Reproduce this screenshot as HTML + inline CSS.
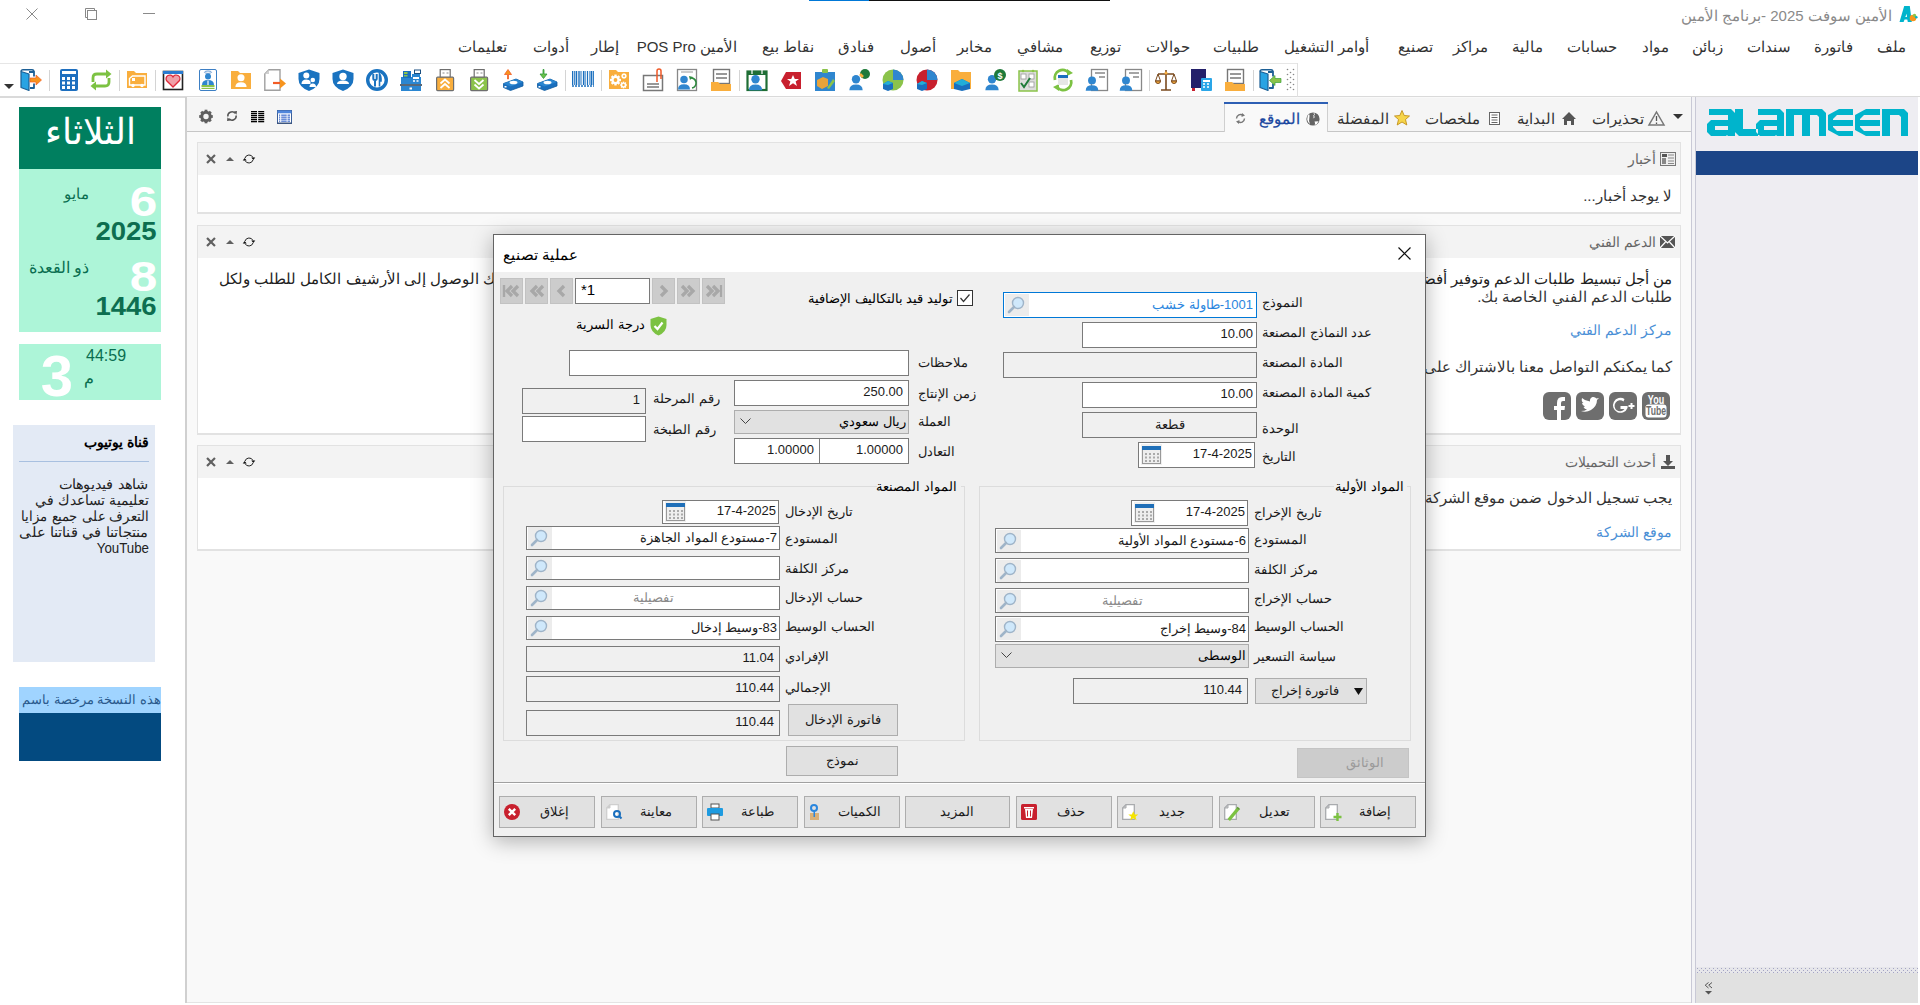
<!DOCTYPE html>
<html><head><meta charset="utf-8"><style>
html,body{margin:0;padding:0;width:1920px;height:1005px;overflow:hidden;background:#fff;font-family:"Liberation Sans",sans-serif}
div{position:absolute;box-sizing:border-box}
.t{white-space:nowrap}
svg{overflow:visible}
</style></head><body>
<div style="left:809px;top:0px;width:60px;height:1px;background:#0078d7"></div>
<div style="left:869px;top:0px;width:241px;height:1px;background:#111"></div>
<svg style="position:absolute;left:26px;top:8px" width="12" height="12" viewBox="0 0 12 12"><path d="M0.5 0.5L11.5 11.5M11.5 0.5L0.5 11.5" stroke="#8a8a8a" stroke-width="1"/></svg>
<svg style="position:absolute;left:85px;top:8px" width="12" height="12" viewBox="0 0 12 12"><path d="M9.5 2V0.5H0.5V9.5H2" fill="none" stroke="#888"/><rect x="2.5" y="2.5" width="9" height="9" fill="none" stroke="#888"/></svg>
<div style="left:143px;top:13px;width:12px;height:1px;background:#8a8a8a"></div>
<div class="t" dir="rtl" style="right:28px;top:4.5px;font-size:15px;line-height:21px;color:#8a8a8a;font-weight:normal;">الأمين سوفت 2025 -برنامج الأمين</div>
<svg style="position:absolute;left:1898px;top:5px" width="22" height="20" viewBox="0 0 22 20"><path d="M1.5 17L6.2 1H11.8L13.8 17H9.8L9.3 14.5H6.6L5.6 17Z M8.6 8.8L7.3 12H9Z" fill="#00b4cc" fill-rule="evenodd"/><circle cx="15" cy="13" r="3.3" fill="#f7941d"/><circle cx="16.5" cy="10.5" r="1.7" fill="#8bc34a"/><circle cx="18.3" cy="12.2" r="1.3" fill="#00b4cc"/></svg>
<div class="t" dir="rtl" style="right:14px;top:35.5px;font-size:15px;line-height:21px;color:#333;font-weight:normal;">ملف</div>
<div class="t" dir="rtl" style="right:67px;top:35.5px;font-size:15px;line-height:21px;color:#333;font-weight:normal;">فاتورة</div>
<div class="t" dir="rtl" style="right:129px;top:35.5px;font-size:15px;line-height:21px;color:#333;font-weight:normal;">سندات</div>
<div class="t" dir="rtl" style="right:197px;top:35.5px;font-size:15px;line-height:21px;color:#333;font-weight:normal;">زبائن</div>
<div class="t" dir="rtl" style="right:251px;top:35.5px;font-size:15px;line-height:21px;color:#333;font-weight:normal;">مواد</div>
<div class="t" dir="rtl" style="right:303px;top:35.5px;font-size:15px;line-height:21px;color:#333;font-weight:normal;">حسابات</div>
<div class="t" dir="rtl" style="right:377px;top:35.5px;font-size:15px;line-height:21px;color:#333;font-weight:normal;">مالية</div>
<div class="t" dir="rtl" style="right:432px;top:35.5px;font-size:15px;line-height:21px;color:#333;font-weight:normal;">مراكز</div>
<div class="t" dir="rtl" style="right:487px;top:35.5px;font-size:15px;line-height:21px;color:#333;font-weight:normal;">تصنيع</div>
<div class="t" dir="rtl" style="right:551px;top:35.5px;font-size:15px;line-height:21px;color:#333;font-weight:normal;">أوامر التشغيل</div>
<div class="t" dir="rtl" style="right:661px;top:35.5px;font-size:15px;line-height:21px;color:#333;font-weight:normal;">طلبيات</div>
<div class="t" dir="rtl" style="right:730px;top:35.5px;font-size:15px;line-height:21px;color:#333;font-weight:normal;">حوالات</div>
<div class="t" dir="rtl" style="right:799px;top:35.5px;font-size:15px;line-height:21px;color:#333;font-weight:normal;">توزيع</div>
<div class="t" dir="rtl" style="right:857px;top:35.5px;font-size:15px;line-height:21px;color:#333;font-weight:normal;">مشافي</div>
<div class="t" dir="rtl" style="right:928px;top:35.5px;font-size:15px;line-height:21px;color:#333;font-weight:normal;">مخابر</div>
<div class="t" dir="rtl" style="right:984px;top:35.5px;font-size:15px;line-height:21px;color:#333;font-weight:normal;">أصول</div>
<div class="t" dir="rtl" style="right:1046px;top:35.5px;font-size:15px;line-height:21px;color:#333;font-weight:normal;">فنادق</div>
<div class="t" dir="rtl" style="right:1106px;top:35.5px;font-size:15px;line-height:21px;color:#333;font-weight:normal;">نقاط بيع</div>
<div class="t" dir="rtl" style="right:1183px;top:35.5px;font-size:15px;line-height:21px;color:#333;font-weight:normal;">الأمين POS Pro</div>
<div class="t" dir="rtl" style="right:1301px;top:35.5px;font-size:15px;line-height:21px;color:#333;font-weight:normal;">إطار</div>
<div class="t" dir="rtl" style="right:1351px;top:35.5px;font-size:15px;line-height:21px;color:#333;font-weight:normal;">أدوات</div>
<div class="t" dir="rtl" style="right:1413px;top:35.5px;font-size:15px;line-height:21px;color:#333;font-weight:normal;">تعليمات</div>
<div style="left:0px;top:63px;width:1298px;height:1px;background:#e6e6e6"></div>
<div style="left:0px;top:96px;width:1920px;height:2px;background:#dadada"></div>
<svg style="position:absolute;left:4px;top:84px" width="10" height="5" viewBox="0 0 10 5"><path d="M0 0H10L5 5Z" fill="#333"/></svg>
<svg style="position:absolute;left:20px;top:69px" width="22" height="22" viewBox="0 0 22 22"><path d="M9 3H14V7.5M14 14.5V19H10" fill="none" stroke="#1d5f95" stroke-width="1.8" stroke-linejoin="round"/><path d="M1 2.5L9 5V21.5L1 18.5Z" fill="#29a3e3" stroke="#1d5f95" stroke-width="1.2" stroke-linejoin="round"/><path d="M1 2.5Q1 0.8 3 0.8H12Q14 0.8 14 3" fill="none" stroke="#1d5f95" stroke-width="1.4"/><path d="M10 9H16V6L21.5 11L16 16V13H10Z" fill="#f7941d" stroke="#f25c26" stroke-width="0.7"/></svg>
<svg style="position:absolute;left:58px;top:69px" width="22" height="22" viewBox="0 0 22 22"><rect x="2" y="0" width="18" height="22" rx="2" fill="#1e6fbf"/><rect x="4" y="2" width="14" height="3" fill="#fff"/><rect x="4" y="8.0" width="3" height="3" fill="#fff"/><rect x="9" y="8.0" width="3" height="3" fill="#fff"/><rect x="14" y="8.0" width="3" height="3" fill="#fff"/><rect x="4" y="12.5" width="3" height="3" fill="#fff"/><rect x="9" y="12.5" width="3" height="3" fill="#fff"/><rect x="14" y="12.5" width="3" height="3" fill="#fff"/><rect x="4" y="17.0" width="3" height="3" fill="#fff"/><rect x="9" y="17.0" width="3" height="3" fill="#fff"/><rect x="14" y="17.0" width="3" height="3" fill="#fff"/></svg>
<svg style="position:absolute;left:90px;top:69px" width="22" height="22" viewBox="0 0 22 22"><path d="M3 13V9Q3 5 7 5H17" fill="none" stroke="#7cc242" stroke-width="2.8"/><path d="M16 0.5L21.5 5L16 9.5Z" fill="#7cc242"/><path d="M19 9V13Q19 17 15 17H5" fill="none" stroke="#7cc242" stroke-width="2.8"/><path d="M6 12.5L0.5 17L6 21.5Z" fill="#7cc242"/></svg>
<svg style="position:absolute;left:126px;top:69px" width="22" height="22" viewBox="0 0 22 22"><path d="M1 2H8L10 4H21V19H1Z" fill="#f9ae3d"/><path d="M3.5 16V9.5L6.5 7H19V16Z" fill="none" stroke="#fff" stroke-width="1.4"/><rect x="6" y="9" width="3" height="3" fill="#fff"/><circle cx="7" cy="16.5" r="1.7" fill="#fff"/><circle cx="16" cy="16.5" r="1.7" fill="#fff"/></svg>
<svg style="position:absolute;left:162px;top:69px" width="22" height="22" viewBox="0 0 22 22"><rect x="1.5" y="2.5" width="19" height="18" fill="#fff" stroke="#222" stroke-width="1.6"/><rect x="1" y="2" width="20" height="3" fill="#2b7bd0"/><path d="M11 18L4.5 11.5A3.5 3.5 0 0 1 11 8A3.5 3.5 0 0 1 17.5 11.5Z" fill="#f0a0a8" stroke="#e02a3a" stroke-width="1.3"/></svg>
<svg style="position:absolute;left:197px;top:69px" width="22" height="22" viewBox="0 0 22 22"><rect x="2.5" y="0.5" width="17" height="21" rx="1.5" fill="#fff" stroke="#3d7fc4"/><ellipse cx="11" cy="3.2" rx="3.5" ry="1.2" fill="none" stroke="#3d7fc4" stroke-width="0.8"/><circle cx="11" cy="7.5" r="3" fill="#2f86cf"/><path d="M5 16Q5 11 11 11Q17 11 17 16Z" fill="#2f86cf"/><path d="M10.5 11.5V16M11.5 11.5V16" stroke="#fff" stroke-width="0.6"/><rect x="4.5" y="16" width="13" height="2" fill="#8bc34a"/><rect x="4.5" y="18.8" width="13" height="1.2" fill="#8bc34a"/></svg>
<svg style="position:absolute;left:230px;top:69px" width="22" height="22" viewBox="0 0 22 22"><path d="M1 2H8L10 4H21V20H1Z" fill="#f9ae3d"/><circle cx="11" cy="8.8" r="3.5200000000000005" fill="#fff"/><path d="M5.3999999999999995 18.0Q5.3999999999999995 13.2 11 13.2Q16.6 13.2 16.6 18.0Z" fill="#fff"/></svg>
<svg style="position:absolute;left:264px;top:69px" width="22" height="22" viewBox="0 0 22 22"><path d="M5 0.8H16V21.2H0.8V5Z" fill="#fff" stroke="#a0a0a0" stroke-width="1.4"/><path d="M5 0.8V5H0.8Z" fill="#d0d0d0"/><path d="M9 14H17" stroke="#f25c26" stroke-width="2.2"/><path d="M16 9.5L22 14.5L16 19.5Z" fill="#f7941d"/></svg>
<svg style="position:absolute;left:298px;top:69px" width="22" height="22" viewBox="0 0 22 22"><path d="M11 0.5L21.5 4V10Q21.5 18 11 22Q0.5 18 0.5 10V4Z" fill="#1a73c0"/><circle cx="8.3" cy="6.5" r="3" fill="#fff"/><path d="M3.5 15Q3.5 10.5 8.3 10.5Q11.5 10.5 12.5 12.5V15Z" fill="#fff"/><circle cx="14.8" cy="11" r="2.3" fill="#fff"/><path d="M11.5 18Q11.5 14.5 14.8 14.5Q18 14.5 18 18Z" fill="#fff"/></svg>
<svg style="position:absolute;left:332px;top:69px" width="22" height="22" viewBox="0 0 22 22"><path d="M11 0.5L21.5 4V10Q21.5 18 11 22Q0.5 18 0.5 10V4Z" fill="#1a73c0"/><circle cx="11" cy="7.5" r="3.7" fill="#fff"/><path d="M5 15Q5 11.5 11 11.5Q17 11.5 17 15Z" fill="#fff"/></svg>
<svg style="position:absolute;left:366px;top:69px" width="22" height="22" viewBox="0 0 22 22"><circle cx="11" cy="11" r="9.3" fill="#fff" stroke="#1a73c0" stroke-width="3.4"/><path d="M7.3 5V9.5Q7.3 11 9 11V17.5" fill="none" stroke="#1a73c0" stroke-width="2"/><path d="M10.7 5V9.5Q10.7 11 9 11" fill="none" stroke="#1a73c0" stroke-width="2"/><path d="M13.5 17.5V5Q15.3 7 15 12H13.5" fill="#1a73c0" stroke="#1a73c0" stroke-width="1.6"/></svg>
<svg style="position:absolute;left:400px;top:69px" width="22" height="22" viewBox="0 0 22 22"><path d="M2 8H12V5H20V8H21V15H1V8Z" fill="#2a86d1"/><rect x="3" y="2" width="8" height="7" fill="#1a6fbe"/><rect x="4" y="3" width="3.5" height="2" fill="#8bc34a"/><rect x="4" y="6" width="3.5" height="1.5" fill="#8bc34a"/><rect x="14.5" y="1" width="6" height="3.5" fill="#fff" stroke="#1a4f80" stroke-width="1"/><rect x="13" y="8" width="6" height="2" fill="#fff"/><path d="M13 12H15M16.5 12H18.5" stroke="#fff" stroke-width="1.6"/><rect x="0" y="15" width="22" height="2" fill="#586878"/><rect x="1" y="17" width="20" height="5" fill="#2a86d1"/><rect x="9.5" y="18.5" width="2.5" height="2" fill="#fff"/></svg>
<svg style="position:absolute;left:436px;top:69px" width="22" height="22" viewBox="0 0 22 22"><rect x="4.2" y="0.6" width="10" height="8" fill="#fff" stroke="#6e6e6e" stroke-width="1.2"/><path d="M6.5 4H8.5M10.5 4H12.5" stroke="#888" stroke-width="1"/><rect x="0.6" y="8.2" width="17" height="13.4" rx="1" fill="#f9ae3d" stroke="#6e6e6e" stroke-width="1.2"/><path d="M4.5 14.5L9 10.5L13.5 14.5M4.5 19L9 15L13.5 19" fill="none" stroke="#fff" stroke-width="1.7"/></svg>
<svg style="position:absolute;left:470px;top:69px" width="22" height="22" viewBox="0 0 22 22"><rect x="4.2" y="0.6" width="10" height="8" fill="#fff" stroke="#6e6e6e" stroke-width="1.2"/><path d="M6.5 4H8.5M10.5 4H12.5" stroke="#888" stroke-width="1"/><rect x="0.6" y="8.2" width="17" height="13.4" rx="1" fill="#8bc34a" stroke="#6e6e6e" stroke-width="1.2"/><path d="M4.5 11L9 15L13.5 11M4.5 15.5L9 19.5L13.5 15.5" fill="none" stroke="#fff" stroke-width="1.7"/></svg>
<svg style="position:absolute;left:502px;top:69px" width="22" height="22" viewBox="0 0 22 22"><path d="M1.5 14.5L14 10L21 13V17L8.5 21.5L1.5 18.5Z" fill="#1a6fbe" stroke="#0f5a9e" stroke-width="0.8"/><path d="M1.5 14.5L14 10L21 13L8.5 17.5Z" fill="#2a86d1"/><ellipse cx="11.5" cy="13.5" rx="4" ry="1.8" fill="#fff"/><rect x="2.5" y="17" width="2" height="1.5" fill="#fff"/><path d="M5.5 10V5.5H2.5L6 0.5L9.5 5.5H6.5V10Z" fill="#f7941d" stroke="#f25c26" stroke-width="0.8"/></svg>
<svg style="position:absolute;left:536px;top:69px" width="22" height="22" viewBox="0 0 22 22"><path d="M1.5 14.5L14 10L21 13V17L8.5 21.5L1.5 18.5Z" fill="#1a6fbe" stroke="#0f5a9e" stroke-width="0.8"/><path d="M1.5 14.5L14 10L21 13L8.5 17.5Z" fill="#2a86d1"/><ellipse cx="11.5" cy="13.5" rx="4" ry="1.8" fill="#fff"/><rect x="2.5" y="17" width="2" height="1.5" fill="#fff"/><path d="M7 0.5V5H4L7.5 9.5L11 5H8V0.5Z" fill="#6cc24a" stroke="#2e9a3a" stroke-width="0.8"/></svg>
<svg style="position:absolute;left:572px;top:69px" width="22" height="22" viewBox="0 0 22 22"><rect x="0" y="2" width="1.3" height="14" fill="#1a6fbe"/><rect x="2.2" y="2" width="0.8" height="14" fill="#1a6fbe"/><rect x="3.6" y="2" width="1.6" height="14" fill="#1a6fbe"/><rect x="6" y="2" width="0.7" height="14" fill="#1a6fbe"/><rect x="7.3" y="2" width="1.2" height="14" fill="#1a6fbe"/><rect x="9.5" y="2" width="0.6" height="14" fill="#1a6fbe"/><rect x="11" y="2" width="1.5" height="14" fill="#1a6fbe"/><rect x="13.4" y="2" width="0.7" height="14" fill="#1a6fbe"/><rect x="15" y="2" width="1.1" height="14" fill="#1a6fbe"/><rect x="17.3" y="2" width="0.6" height="14" fill="#1a6fbe"/><rect x="18.5" y="2" width="1.5" height="14" fill="#1a6fbe"/><rect x="20.6" y="2" width="1.3" height="14" fill="#1a6fbe"/><path d="M0 17H22" stroke="#1a6fbe" stroke-width="1.6" stroke-dasharray="2 1"/></svg>
<svg style="position:absolute;left:608px;top:69px" width="22" height="22" viewBox="0 0 22 22"><path d="M1 1H8L10 3H21V20H1Z" fill="#f9ae3d"/><circle cx="7.5" cy="11" r="4.2" fill="#fff"/><rect x="6.324" y="5.539999999999999" width="2.3520000000000003" height="2.94" fill="#fff" transform="rotate(0 7.5 11)"/><rect x="6.324" y="5.539999999999999" width="2.3520000000000003" height="2.94" fill="#fff" transform="rotate(45 7.5 11)"/><rect x="6.324" y="5.539999999999999" width="2.3520000000000003" height="2.94" fill="#fff" transform="rotate(90 7.5 11)"/><rect x="6.324" y="5.539999999999999" width="2.3520000000000003" height="2.94" fill="#fff" transform="rotate(135 7.5 11)"/><rect x="6.324" y="5.539999999999999" width="2.3520000000000003" height="2.94" fill="#fff" transform="rotate(180 7.5 11)"/><rect x="6.324" y="5.539999999999999" width="2.3520000000000003" height="2.94" fill="#fff" transform="rotate(225 7.5 11)"/><rect x="6.324" y="5.539999999999999" width="2.3520000000000003" height="2.94" fill="#fff" transform="rotate(270 7.5 11)"/><rect x="6.324" y="5.539999999999999" width="2.3520000000000003" height="2.94" fill="#fff" transform="rotate(315 7.5 11)"/><circle cx="7.5" cy="11" r="1.8900000000000001" fill="#f9ae3d"/><circle cx="16" cy="7" r="2.2" fill="#fff"/><rect x="15.384" y="4.14" width="1.2320000000000002" height="1.54" fill="#fff" transform="rotate(0 16 7)"/><rect x="15.384" y="4.14" width="1.2320000000000002" height="1.54" fill="#fff" transform="rotate(45 16 7)"/><rect x="15.384" y="4.14" width="1.2320000000000002" height="1.54" fill="#fff" transform="rotate(90 16 7)"/><rect x="15.384" y="4.14" width="1.2320000000000002" height="1.54" fill="#fff" transform="rotate(135 16 7)"/><rect x="15.384" y="4.14" width="1.2320000000000002" height="1.54" fill="#fff" transform="rotate(180 16 7)"/><rect x="15.384" y="4.14" width="1.2320000000000002" height="1.54" fill="#fff" transform="rotate(225 16 7)"/><rect x="15.384" y="4.14" width="1.2320000000000002" height="1.54" fill="#fff" transform="rotate(270 16 7)"/><rect x="15.384" y="4.14" width="1.2320000000000002" height="1.54" fill="#fff" transform="rotate(315 16 7)"/><circle cx="16" cy="7" r="0.9900000000000001" fill="#f9ae3d"/><circle cx="15.5" cy="16" r="2.6" fill="#fff"/><rect x="14.772" y="12.62" width="1.4560000000000002" height="1.8199999999999998" fill="#fff" transform="rotate(0 15.5 16)"/><rect x="14.772" y="12.62" width="1.4560000000000002" height="1.8199999999999998" fill="#fff" transform="rotate(45 15.5 16)"/><rect x="14.772" y="12.62" width="1.4560000000000002" height="1.8199999999999998" fill="#fff" transform="rotate(90 15.5 16)"/><rect x="14.772" y="12.62" width="1.4560000000000002" height="1.8199999999999998" fill="#fff" transform="rotate(135 15.5 16)"/><rect x="14.772" y="12.62" width="1.4560000000000002" height="1.8199999999999998" fill="#fff" transform="rotate(180 15.5 16)"/><rect x="14.772" y="12.62" width="1.4560000000000002" height="1.8199999999999998" fill="#fff" transform="rotate(225 15.5 16)"/><rect x="14.772" y="12.62" width="1.4560000000000002" height="1.8199999999999998" fill="#fff" transform="rotate(270 15.5 16)"/><rect x="14.772" y="12.62" width="1.4560000000000002" height="1.8199999999999998" fill="#fff" transform="rotate(315 15.5 16)"/><circle cx="15.5" cy="16" r="1.1700000000000002" fill="#f9ae3d"/></svg>
<svg style="position:absolute;left:642px;top:69px" width="22" height="22" viewBox="0 0 22 22"><rect x="1.5" y="6.5" width="19" height="15" fill="#fff" stroke="#777" stroke-width="1.5"/><path d="M5 15H17M5 18H17" stroke="#777" stroke-width="1.3"/><path d="M15 13V2A2 2 0 0 1 19 2V10" fill="none" stroke="#f05a28" stroke-width="1.5"/></svg>
<svg style="position:absolute;left:676px;top:69px" width="22" height="22" viewBox="0 0 22 22"><rect x="1.5" y="0.5" width="19" height="21" fill="#fff" stroke="#888" stroke-width="1.3"/><path d="M5 3H17" stroke="#999"/><circle cx="8" cy="10.6" r="3.74" fill="#2f86cf"/><path d="M2.05 20.375Q2.05 15.275 8 15.275Q13.95 15.275 13.95 20.375Z" fill="#2f86cf"/><path d="M14 9A5 5 0 0 1 16 19" fill="none" stroke="#2e8b3e" stroke-width="1.6"/><path d="M13 7L17 8L14 11Z" fill="#2e8b3e"/></svg>
<svg style="position:absolute;left:710px;top:69px" width="22" height="22" viewBox="0 0 22 22"><rect x="3.5" y="0.5" width="16" height="14" fill="#fff" stroke="#777" stroke-width="1.4"/><path d="M6 5H17M6 9H17" stroke="#777" stroke-width="1.4"/><path d="M1 13H8L10 15H21V22H1Z" fill="#f9ae3d"/></svg>
<svg style="position:absolute;left:746px;top:69px" width="22" height="22" viewBox="0 0 22 22"><rect x="1.5" y="2.5" width="19" height="18.5" fill="#fff" stroke="#1f6e35" stroke-width="2.2"/><rect x="1" y="2" width="20" height="4" fill="#1f6e35"/><path d="M6 0V5M16 0V5" stroke="#fff" stroke-width="1.2"/><circle cx="9.5" cy="10.2" r="4.18" fill="#2f86cf"/><path d="M2.8500000000000005 21.125Q2.8500000000000005 15.425 9.5 15.425Q16.15 15.425 16.15 21.125Z" fill="#2f86cf"/></svg>
<svg style="position:absolute;left:780px;top:69px" width="22" height="22" viewBox="0 0 22 22"><path d="M6 3H21V20H6L1 12Z" fill="#c8202e"/><path d="M13 6L14.8 10H19L15.6 12.5L17 17L13 14.2L9 17L10.4 12.5L7 10H11.2Z" fill="#fff"/></svg>
<svg style="position:absolute;left:814px;top:69px" width="22" height="22" viewBox="0 0 22 22"><rect x="1" y="3" width="20" height="19" fill="#2f86cf"/><rect x="8" y="0" width="6" height="4" rx="1" fill="#8bc34a"/><path d="M3 11L9 8L14 10V17L8 20L3 17Z" fill="#e8a33a"/><path d="M13 19L19 10L21 12L15 20Z" fill="#8bc34a"/></svg>
<svg style="position:absolute;left:848px;top:69px" width="22" height="22" viewBox="0 0 22 22"><circle cx="8" cy="10.2" r="4.18" fill="#2f86cf"/><path d="M1.3500000000000005 21.125Q1.3500000000000005 15.425 8 15.425Q14.649999999999999 15.425 14.649999999999999 21.125Z" fill="#2f86cf"/><circle cx="17" cy="5" r="5" fill="#1f7a3a"/><path d="M12 5L15 8" stroke="#f9ae3d" stroke-width="2.5"/></svg>
<svg style="position:absolute;left:882px;top:69px" width="22" height="22" viewBox="0 0 22 22"><circle cx="11" cy="11" r="10.5" fill="#8bc34a"/><path d="M11 11V0.5A10.5 10.5 0 0 1 21.5 11Z" fill="#2f86cf"/><path d="M1 15L6 12L11 14V20L6 22L1 20Z" fill="#1a6fbe"/><path d="M1 15L6 12L11 14L6 16Z" fill="#22aed8"/></svg>
<svg style="position:absolute;left:916px;top:69px" width="22" height="22" viewBox="0 0 22 22"><circle cx="11" cy="11" r="10.5" fill="#c8202e"/><path d="M11 11V0.5A10.5 10.5 0 0 1 21.5 11Z" fill="#2f86cf"/><path d="M1 15L6 12L11 14V20L6 22L1 20Z" fill="#1a6fbe"/><path d="M1 15L6 12L11 14L6 16Z" fill="#22aed8"/></svg>
<svg style="position:absolute;left:950px;top:69px" width="22" height="22" viewBox="0 0 22 22"><path d="M1 1H8L10 3H21V20H1Z" fill="#f9ae3d"/><path d="M4 14L12 10L20 14V20L12 22L4 20Z" fill="#1a6fbe"/><path d="M4 14L12 10L20 14L12 17Z" fill="#22aed8"/></svg>
<svg style="position:absolute;left:984px;top:69px" width="22" height="22" viewBox="0 0 22 22"><circle cx="8" cy="10.2" r="4.18" fill="#2f86cf"/><path d="M1.3500000000000005 21.125Q1.3500000000000005 15.425 8 15.425Q14.649999999999999 15.425 14.649999999999999 21.125Z" fill="#2f86cf"/><circle cx="16" cy="6" r="6" fill="#1f7a3a"/><text x="16" y="9.5" font-size="9" font-weight="bold" fill="#fff" text-anchor="middle" font-family="Liberation Sans">$</text></svg>
<svg style="position:absolute;left:1018px;top:69px" width="22" height="22" viewBox="0 0 22 22"><rect x="1" y="2" width="18" height="20" fill="#ddd" stroke="#8bc34a" stroke-width="1.5"/><rect x="3" y="5" width="5" height="5" fill="#fff" stroke="#999" stroke-width="0.8"/><rect x="11" y="5" width="5" height="5" fill="#fff" stroke="#999" stroke-width="0.8"/><rect x="11" y="13" width="5" height="5" fill="#fff" stroke="#999" stroke-width="0.8"/><path d="M3 14L6 18L12 9" fill="none" stroke="#1f7a3a" stroke-width="2"/><circle cx="5" cy="2" r="1.3" fill="#8bc34a"/><circle cx="15" cy="2" r="1.3" fill="#8bc34a"/></svg>
<svg style="position:absolute;left:1052px;top:69px" width="22" height="22" viewBox="0 0 22 22"><path d="M3 11A8 8 0 0 1 17 4" fill="none" stroke="#7cc242" stroke-width="2.8"/><path d="M15 0L21 4L15 7Z" fill="#7cc242"/><path d="M19 11A8 8 0 0 1 5 18" fill="none" stroke="#7cc242" stroke-width="2.8"/><path d="M7 22L1 18L7 15Z" fill="#7cc242"/><rect x="6" y="6" width="10" height="10" fill="#e6e6e6"/><rect x="6" y="6" width="10" height="3" fill="#1a6fbe"/></svg>
<svg style="position:absolute;left:1086px;top:69px" width="22" height="22" viewBox="0 0 22 22"><rect x="5.5" y="0.5" width="16" height="21" fill="#fff" stroke="#888" stroke-width="1.3"/><path d="M9 4H19M13 8H19" stroke="#888" stroke-width="1.3"/><circle cx="6" cy="11.4" r="3.9600000000000004" fill="#2f86cf"/><path d="M-0.2999999999999998 21.75Q-0.2999999999999998 16.35 6 16.35Q12.3 16.35 12.3 21.75Z" fill="#2f86cf"/></svg>
<svg style="position:absolute;left:1120px;top:69px" width="22" height="22" viewBox="0 0 22 22"><rect x="5.5" y="0.5" width="16" height="21" fill="#fff" stroke="#888" stroke-width="1.3"/><path d="M9 4H19M13 8H19" stroke="#888" stroke-width="1.3"/><circle cx="6" cy="11.4" r="3.9600000000000004" fill="#2f86cf"/><path d="M-0.2999999999999998 21.75Q-0.2999999999999998 16.35 6 16.35Q12.3 16.35 12.3 21.75Z" fill="#2f86cf"/></svg>
<svg style="position:absolute;left:1155px;top:69px" width="22" height="22" viewBox="0 0 22 22"><path d="M11 1V21M6 21H16M3 5H19" stroke="#7a4a1e" stroke-width="1.6"/><path d="M3 5L0.5 12H5.5Z M19 5L16.5 12H21.5Z" fill="none" stroke="#7a4a1e" stroke-width="1"/><path d="M0.5 12A2.5 2.5 0 0 0 5.5 12Z M16.5 12A2.5 2.5 0 0 0 21.5 12Z" fill="#f9ae3d" stroke="#7a4a1e"/><circle cx="11" cy="4" r="1.5" fill="#f9ae3d"/></svg>
<svg style="position:absolute;left:1190px;top:69px" width="22" height="22" viewBox="0 0 22 22"><rect x="1" y="0" width="15" height="19" fill="#24206a"/><rect x="2" y="19" width="3" height="3" fill="#c8202e"/><rect x="11" y="9" width="11" height="13" rx="1" fill="#2aa6e8"/><rect x="13" y="11" width="7" height="2" fill="#fff"/><path d="M13 15H15M17 15H19M13 18H15M17 18H19" stroke="#fff" stroke-width="1.5"/></svg>
<svg style="position:absolute;left:1224px;top:69px" width="22" height="22" viewBox="0 0 22 22"><rect x="3.5" y="0.5" width="16" height="14" fill="#fff" stroke="#777" stroke-width="1.4"/><path d="M6 5H17M6 9H17" stroke="#777" stroke-width="1.4"/><path d="M1 13H8L10 15H21V22H1Z" fill="#f9ae3d"/></svg>
<svg style="position:absolute;left:1259px;top:69px" width="22" height="22" viewBox="0 0 22 22"><path d="M9 3H14V7.5M14 14.5V19H10" fill="none" stroke="#1d5f95" stroke-width="1.8" stroke-linejoin="round"/><path d="M1 2.5L9 5V21.5L1 18.5Z" fill="#29a3e3" stroke="#1d5f95" stroke-width="1.2" stroke-linejoin="round"/><path d="M1 2.5Q1 0.8 3 0.8H12Q14 0.8 14 3" fill="none" stroke="#1d5f95" stroke-width="1.4"/><path d="M22 9.5H16V6.5L10.5 11.5L16 16.5V13.5H22Z" fill="#8bc34a" stroke="#3aa03a" stroke-width="0.7"/></svg>
<div style="left:49px;top:70px;width:1px;height:21px;background:#d4d4d4"></div>
<div style="left:119px;top:70px;width:1px;height:21px;background:#d4d4d4"></div>
<div style="left:155px;top:70px;width:1px;height:21px;background:#d4d4d4"></div>
<div style="left:565px;top:70px;width:1px;height:21px;background:#d4d4d4"></div>
<div style="left:601px;top:70px;width:1px;height:21px;background:#d4d4d4"></div>
<div style="left:739px;top:70px;width:1px;height:21px;background:#d4d4d4"></div>
<div style="left:1149px;top:70px;width:1px;height:21px;background:#d4d4d4"></div>
<div style="left:1253px;top:70px;width:1px;height:21px;background:#d4d4d4"></div>
<svg style="position:absolute;left:1286px;top:68px" width="10" height="24" viewBox="0 0 10 24"><circle cx="1.5" cy="1.5" r="0.8" fill="#888"/><circle cx="7.5" cy="1.5" r="0.8" fill="#888"/><circle cx="1.5" cy="6.5" r="0.8" fill="#888"/><circle cx="7.5" cy="6.5" r="0.8" fill="#888"/><circle cx="1.5" cy="11.5" r="0.8" fill="#888"/><circle cx="7.5" cy="11.5" r="0.8" fill="#888"/><circle cx="1.5" cy="16.5" r="0.8" fill="#888"/><circle cx="7.5" cy="16.5" r="0.8" fill="#888"/><circle cx="1.5" cy="21.5" r="0.8" fill="#888"/><circle cx="7.5" cy="21.5" r="0.8" fill="#888"/><circle cx="4.5" cy="4.5" r="0.8" fill="#888"/><circle cx="4.5" cy="9.5" r="0.8" fill="#888"/><circle cx="4.5" cy="14.5" r="0.8" fill="#888"/><circle cx="4.5" cy="19.5" r="0.8" fill="#888"/></svg>
<div style="left:1297px;top:63px;width:1px;height:34px;background:#e0e0e0"></div>
<div style="left:0px;top:98px;width:185px;height:905px;background:#fff"></div>
<div style="left:185px;top:97px;width:2px;height:906px;background:#d0d0d0"></div>
<div style="left:19px;top:107px;width:142px;height:62px;background:#007f5f"></div>
<div class="t" dir="rtl" style="left:-210px;width:600px;text-align:center;top:107.0px;font-size:36px;line-height:50px;color:#fff;font-weight:normal;">الثلاثاء</div>
<div style="left:19px;top:169px;width:142px;height:163px;background:#adf5d8"></div>
<div class="t" dir="rtl" style="right:1763px;top:173.0px;font-size:42px;line-height:58px;color:#fff;font-weight:bold;transform:scaleX(1.18);transform-origin:100% 50%">6</div>
<div class="t" dir="rtl" style="right:1831px;top:182.5px;font-size:15px;line-height:21px;color:#0a6e50;font-weight:normal;">مايو</div>
<div class="t" dir="rtl" style="right:1763px;top:213.5px;font-size:25px;line-height:35px;color:#0d6e50;font-weight:bold;transform:scaleX(1.1);transform-origin:100% 50%">2025</div>
<div class="t" dir="rtl" style="right:1763px;top:248.0px;font-size:42px;line-height:58px;color:#fff;font-weight:bold;transform:scaleX(1.18);transform-origin:100% 50%">8</div>
<div class="t" dir="rtl" style="right:1831px;top:257.0px;font-size:16px;line-height:22px;color:#0a6e50;font-weight:normal;">ذو القعدة</div>
<div class="t" dir="rtl" style="right:1763px;top:288.5px;font-size:25px;line-height:35px;color:#0d6e50;font-weight:bold;transform:scaleX(1.1);transform-origin:100% 50%">1446</div>
<div style="left:19px;top:344px;width:142px;height:56px;background:#adf5d8"></div>
<div class="t" dir="rtl" style="left:-243px;width:600px;text-align:center;top:334.5px;font-size:58px;line-height:81px;color:#fff;font-weight:bold;">3</div>
<div class="t" dir="ltr" style="left:86px;top:345.0px;font-size:16px;line-height:22px;color:#0a6e50;font-weight:normal;">44:59</div>
<div class="t" dir="rtl" style="right:1826px;top:368.0px;font-size:16px;line-height:22px;color:#0a6e50;font-weight:normal;">م</div>
<div style="left:13px;top:425px;width:142px;height:237px;background:#e3eaf5"></div>
<div class="t" dir="rtl" style="right:1771px;top:432.5px;font-size:14px;line-height:19px;color:#000;font-weight:bold;">قناة يوتيوب</div>
<div style="left:19px;top:461px;width:130px;height:1px;background:#a8c0e0"></div>
<div class="t" dir="rtl" style="right:1771px;top:474.5px;font-size:14px;line-height:19px;color:#222;font-weight:normal;transform:scaleX(1.04);transform-origin:100% 50%">شاهد فيديوهات</div>
<div class="t" dir="rtl" style="right:1771px;top:490.5px;font-size:14px;line-height:19px;color:#222;font-weight:normal;transform:scaleX(1.0);transform-origin:100% 50%">تعليمية تساعدك في</div>
<div class="t" dir="rtl" style="right:1771px;top:506.5px;font-size:14px;line-height:19px;color:#222;font-weight:normal;transform:scaleX(0.945);transform-origin:100% 50%">التعرف على جميع مزايا</div>
<div class="t" dir="rtl" style="right:1771px;top:522.5px;font-size:14px;line-height:19px;color:#222;font-weight:normal;transform:scaleX(1.045);transform-origin:100% 50%">منتجاتنا في قناتنا على</div>
<div class="t" dir="rtl" style="right:1771px;top:538.5px;font-size:14px;line-height:19px;color:#222;font-weight:normal;transform:scaleX(0.95);transform-origin:100% 50%">YouTube</div>
<div style="left:19px;top:687px;width:142px;height:26px;background:#a0d4ff;overflow:hidden"></div>
<div class="t" dir="rtl" style="right:1759px;top:691.0px;font-size:13px;line-height:18px;color:#2a5a8c;font-weight:normal;left:19px;overflow:hidden">هذه النسخة مرخصة باسم</div>
<div style="left:19px;top:713px;width:142px;height:48px;background:#034a80"></div>
<div style="left:187px;top:97px;width:1504px;height:906px;background:#f9f9f9"></div>
<div style="left:187px;top:98px;width:1504px;height:33px;background:#f5f5f5"></div>
<div style="left:187px;top:131px;width:1504px;height:1px;background:#c6c6c6"></div>
<div style="left:187px;top:1002px;width:1504px;height:1px;background:#e4e4e4"></div>
<svg style="position:absolute;left:199px;top:110px" width="14" height="14" viewBox="0 0 14 14"><circle cx="7" cy="6.5" r="4.2" fill="none" stroke="#5f5f5f" stroke-width="3"/><rect x="5.6" y="-0.3" width="2.8" height="3" fill="#5f5f5f" transform="rotate(0 7 6.5)"/><rect x="5.6" y="-0.3" width="2.8" height="3" fill="#5f5f5f" transform="rotate(45 7 6.5)"/><rect x="5.6" y="-0.3" width="2.8" height="3" fill="#5f5f5f" transform="rotate(90 7 6.5)"/><rect x="5.6" y="-0.3" width="2.8" height="3" fill="#5f5f5f" transform="rotate(135 7 6.5)"/><rect x="5.6" y="-0.3" width="2.8" height="3" fill="#5f5f5f" transform="rotate(180 7 6.5)"/><rect x="5.6" y="-0.3" width="2.8" height="3" fill="#5f5f5f" transform="rotate(225 7 6.5)"/><rect x="5.6" y="-0.3" width="2.8" height="3" fill="#5f5f5f" transform="rotate(270 7 6.5)"/><rect x="5.6" y="-0.3" width="2.8" height="3" fill="#5f5f5f" transform="rotate(315 7 6.5)"/></svg>
<svg style="position:absolute;left:226px;top:110px" width="12" height="12" viewBox="0 0 12 12"><path d="M1.8 6.5A4.2 4.2 0 0 1 9 3.2M10.2 5.5A4.2 4.2 0 0 1 3 8.8" fill="none" stroke="#555" stroke-width="1.5"/><path d="M7.5 1.5L11 1L10.5 4.8Z M4.5 10.5L1 11L1.5 7.2Z" fill="#555"/></svg>
<svg style="position:absolute;left:251px;top:110px" width="14" height="13" viewBox="0 0 14 13"><rect x="0" y="1" width="6" height="1.3" fill="#000"/><rect x="7.2" y="1" width="6" height="1.3" fill="#000"/><rect x="0" y="3" width="6" height="1.3" fill="#000"/><rect x="7.2" y="3" width="6" height="1.3" fill="#000"/><rect x="0" y="5" width="6" height="1.3" fill="#000"/><rect x="7.2" y="5" width="6" height="1.3" fill="#000"/><rect x="0" y="7" width="6" height="1.3" fill="#000"/><rect x="7.2" y="7" width="6" height="1.3" fill="#000"/><rect x="0" y="9" width="6" height="1.3" fill="#000"/><rect x="7.2" y="9" width="6" height="1.3" fill="#000"/><rect x="0" y="11" width="6" height="1.3" fill="#000"/><rect x="7.2" y="11" width="6" height="1.3" fill="#000"/></svg>
<svg style="position:absolute;left:277px;top:110px" width="15" height="14" viewBox="0 0 15 14"><rect x="0.5" y="0.5" width="14" height="13" fill="#fff" stroke="#3b5f9a"/><rect x="0.5" y="0.5" width="14" height="2.8" fill="#4f86dc"/><rect x="0" y="12.5" width="15" height="1.5" fill="#3b5580"/><rect x="2" y="4.6" width="1.2" height="1.1" fill="#2d5fc8"/><rect x="4.2" y="4.6" width="5.5" height="1.1" fill="#2d5fc8"/><rect x="10.5" y="4.6" width="2.5" height="1.1" fill="#2d5fc8"/><rect x="2" y="6.6" width="1.2" height="1.1" fill="#2d5fc8"/><rect x="4.2" y="6.6" width="5.5" height="1.1" fill="#2d5fc8"/><rect x="10.5" y="6.6" width="2.5" height="1.1" fill="#2d5fc8"/><rect x="2" y="8.6" width="1.2" height="1.1" fill="#2d5fc8"/><rect x="4.2" y="8.6" width="5.5" height="1.1" fill="#2d5fc8"/><rect x="10.5" y="8.6" width="2.5" height="1.1" fill="#2d5fc8"/><rect x="2" y="10.6" width="1.2" height="1.1" fill="#2d5fc8"/><rect x="4.2" y="10.6" width="5.5" height="1.1" fill="#2d5fc8"/><rect x="10.5" y="10.6" width="2.5" height="1.1" fill="#2d5fc8"/></svg>
<div style="left:1224px;top:102px;width:104px;height:30px;background:#f9f9f9;border:1px solid #cfcfcf;border-bottom:none"></div>
<div style="left:1224px;top:102px;width:104px;height:2px;background:#2d5fb4"></div>
<div class="t" dir="rtl" style="right:620px;top:107.5px;font-size:15px;line-height:21px;color:#1a47a0;font-weight:normal;-webkit-text-stroke:0.25px #1a47a0">الموقع</div>
<div class="t" dir="rtl" style="right:531px;top:107.5px;font-size:15px;line-height:21px;color:#333;font-weight:normal;">المفضلة</div>
<div class="t" dir="rtl" style="right:440px;top:107.5px;font-size:15px;line-height:21px;color:#333;font-weight:normal;">ملخصات</div>
<div class="t" dir="rtl" style="right:365px;top:107.5px;font-size:15px;line-height:21px;color:#333;font-weight:normal;">البداية</div>
<div class="t" dir="rtl" style="right:276px;top:107.5px;font-size:15px;line-height:21px;color:#333;font-weight:normal;">تحذيرات</div>
<svg style="position:absolute;left:1673px;top:114px" width="10" height="5" viewBox="0 0 10 5"><path d="M0 0H10L5 5Z" fill="#333"/></svg>
<svg style="position:absolute;left:1648px;top:111px" width="17" height="15" viewBox="0 0 17 15"><path d="M8.5 1L16 14H1Z" fill="none" stroke="#777" stroke-width="1.5"/><path d="M8.5 5V10M8.5 11.5V13" stroke="#555" stroke-width="1.3"/></svg>
<svg style="position:absolute;left:1562px;top:112px" width="14" height="13" viewBox="0 0 14 13"><path d="M7 0L14 7H12V13H9V9H5V13H2V7H0Z" fill="#555"/></svg>
<svg style="position:absolute;left:1489px;top:112px" width="11" height="13" viewBox="0 0 11 13"><rect x="0.5" y="0.5" width="10" height="12" fill="#fff" stroke="#666"/><path d="M2.5 3H8.5M2.5 5.5H8.5M2.5 8H8.5M2.5 10.5H8.5" stroke="#666"/></svg>
<svg style="position:absolute;left:1394px;top:110px" width="16" height="16" viewBox="0 0 16 16"><path d="M8 0.5L10.2 5.5L15.5 6L11.5 9.5L12.8 15L8 12L3.2 15L4.5 9.5L0.5 6L5.8 5.5Z" fill="#f6d54a" stroke="#c2901a" stroke-width="0.9"/></svg>
<svg style="position:absolute;left:1306px;top:112px" width="14" height="14" viewBox="0 0 14 14"><circle cx="7" cy="7" r="6.6" fill="#646464"/><path d="M3 1.8Q1 4 1.2 7.5Q1.5 10.5 4 12Q2.5 9 3.3 6Q4 3.5 3 1.8Z" fill="#fff"/><path d="M8 1.2L8.5 2.5L7.6 3.8L8.3 5L7.5 6.2" fill="none" stroke="#fff" stroke-width="0.9"/><path d="M8.5 9.5L12.6 9.2Q11.5 12.2 8.7 13Q9.5 11 8.5 9.5Z" fill="#fff"/></svg>
<svg style="position:absolute;left:1235px;top:113px" width="11" height="11" viewBox="0 0 11 11"><path d="M1.5 5.5A4 4 0 0 1 8 2.5M9.5 5.5A4 4 0 0 1 3 8.5" fill="none" stroke="#777" stroke-width="1.4"/><path d="M7 0L10 2.5L6.5 4Z M4 11L1 8.5L4.5 7Z" fill="#777"/></svg>
<div style="left:197px;top:142px;width:1484px;height:72px;background:#fff;border:1px solid #e2e2e2;border-bottom:2px solid #e2e2e2"></div>
<div style="left:198px;top:143px;width:1482px;height:32px;background:#f3f3f3"></div>
<svg style="position:absolute;left:206px;top:154px" width="10" height="10" viewBox="0 0 10 10"><path d="M1.8 1.8L8.2 8.2M8.2 1.8L1.8 8.2" stroke="#606060" stroke-width="2.2" stroke-linecap="square"/></svg>
<svg style="position:absolute;left:225px;top:156px" width="10" height="6" viewBox="0 0 10 6"><path d="M1 5L5 1L9 5Z" fill="#606060"/></svg>
<svg style="position:absolute;left:242px;top:153px" width="14" height="12" viewBox="0 0 14 12"><path d="M3 5A4.3 4.3 0 0 1 11 4.5M11 7A4.3 4.3 0 0 1 3 7.5" fill="none" stroke="#222" stroke-width="1"/><path d="M9.3 4.6H13.3L11.3 7Z M0.7 7.4H4.7L2.7 5Z" fill="#111"/></svg>
<div class="t" dir="rtl" style="right:264px;top:149.5px;font-size:14px;line-height:19px;color:#666;font-weight:normal;">أخبار</div>
<svg style="position:absolute;left:1660px;top:152px" width="16" height="14" viewBox="0 0 16 14"><rect x="0.5" y="0.5" width="15" height="13" fill="#eee" stroke="#777"/><rect x="2" y="2" width="5" height="3" fill="#555"/><rect x="2" y="6" width="4" height="6" fill="#888"/><path d="M8 3H14M8 6H14M8 9H14M8 11.5H14" stroke="#888"/></svg>
<div class="t" dir="rtl" style="right:248px;top:184.5px;font-size:15px;line-height:21px;color:#333;font-weight:normal;">لا يوجد أخبار...</div>
<div style="left:197px;top:225px;width:1484px;height:210px;background:#fff;border:1px solid #e2e2e2;border-bottom:2px solid #e2e2e2"></div>
<div style="left:198px;top:226px;width:1482px;height:32px;background:#f3f3f3"></div>
<svg style="position:absolute;left:206px;top:237px" width="10" height="10" viewBox="0 0 10 10"><path d="M1.8 1.8L8.2 8.2M8.2 1.8L1.8 8.2" stroke="#606060" stroke-width="2.2" stroke-linecap="square"/></svg>
<svg style="position:absolute;left:225px;top:239px" width="10" height="6" viewBox="0 0 10 6"><path d="M1 5L5 1L9 5Z" fill="#606060"/></svg>
<svg style="position:absolute;left:242px;top:236px" width="14" height="12" viewBox="0 0 14 12"><path d="M3 5A4.3 4.3 0 0 1 11 4.5M11 7A4.3 4.3 0 0 1 3 7.5" fill="none" stroke="#222" stroke-width="1"/><path d="M9.3 4.6H13.3L11.3 7Z M0.7 7.4H4.7L2.7 5Z" fill="#111"/></svg>
<div class="t" dir="rtl" style="right:264px;top:232.5px;font-size:14px;line-height:19px;color:#666;font-weight:normal;">الدعم الفني</div>
<svg style="position:absolute;left:1660px;top:236px" width="15" height="12" viewBox="0 0 15 12"><rect x="0" y="0" width="15" height="12" fill="#555"/><path d="M0 0L7.5 7L15 0M0 12L5.5 6M15 12L9.5 6" stroke="#fff" stroke-width="1.2" fill="none"/></svg>
<div class="t" dir="rtl" style="right:248px;top:267.5px;font-size:15px;line-height:21px;color:#222;font-weight:normal;left:520px;overflow:hidden">من أجل تبسيط طلبات الدعم وتوفير أفضل خدمة ممكنة لعملائنا، قمنا بإنشاء مركز للدعم الفني يمكنك من خلاله إرسال طلبات الدعم ومتابعتها، كما يمكنك الوصول إلى الأرشيف الكامل للطلب ولكل</div>
<div class="t" dir="rtl" style="right:248px;top:285.5px;font-size:15px;line-height:21px;color:#333;font-weight:normal;">طلبات الدعم الفني الخاصة بك.</div>
<div class="t" dir="ltr" style="left:219px;top:267.5px;font-size:15px;line-height:21px;color:#222;font-weight:normal;direction:rtl;unicode-bidi:plaintext">قمنا بإنشاء مركز للدعم الفني يمكنك من خلاله إرسال طلبات الدعم ومتابعتها، كما يمكنك الوصول إلى الأرشيف الكامل للطلب ولكل</div>
<div class="t" dir="rtl" style="right:248px;top:320.5px;font-size:14px;line-height:19px;color:#4a8fd6;font-weight:normal;">مركز الدعم الفني</div>
<div class="t" dir="rtl" style="right:248px;top:355.5px;font-size:15px;line-height:21px;color:#333;font-weight:normal;">كما يمكنكم التواصل معنا بالاشتراك على صفحاتنا على مواقع التواصل الاجتماعي</div>
<div style="left:1642px;top:392px;width:28px;height:28px;background:#6e6e6e;border-radius:6px"></div>
<div style="left:1609px;top:392px;width:28px;height:28px;background:#6e6e6e;border-radius:6px"></div>
<div style="left:1576px;top:392px;width:28px;height:28px;background:#6e6e6e;border-radius:6px"></div>
<div style="left:1543px;top:392px;width:28px;height:28px;background:#6e6e6e;border-radius:6px"></div>
<svg style="position:absolute;left:1642px;top:392px" width="28" height="28" viewBox="0 0 28 28"><text x="14" y="12.5" font-size="12" font-weight="bold" fill="#fff" text-anchor="middle" font-family="Liberation Sans" transform="translate(14 0) scale(0.75 1) translate(-14 0)">You</text><rect x="3.5" y="12.5" width="21" height="13" rx="3" fill="#fff"/><text x="14" y="23.5" font-size="12" font-weight="bold" fill="#6e6e6e" text-anchor="middle" font-family="Liberation Sans" transform="translate(14 0) scale(0.72 1) translate(-14 0)">Tube</text></svg>
<svg style="position:absolute;left:1609px;top:392px" width="28" height="28" viewBox="0 0 28 28"><path d="M14.5 9.5A5.5 5.5 0 1 0 15.5 17H11.5V14H18.5Q18.7 15 18.5 16A7.5 7.5 0 1 1 15.5 7Z" fill="#fff"/><path d="M22.5 11V17M19.5 14H25.5" stroke="#fff" stroke-width="2"/></svg>
<svg style="position:absolute;left:1576px;top:392px" width="28" height="28" viewBox="0 0 28 28"><path d="M5 19Q10 21 15 18Q21 14 21 8L23 6L20.5 6.5Q19 4.5 16.5 5Q13.5 6 14 9.5Q9 9 6 6Q5 9.5 7.5 11L6 11Q6.5 14 9 14.5L7.5 15Q8.5 17 11 17.5Q8.5 19 5 19Z" fill="#fff"/></svg>
<svg style="position:absolute;left:1543px;top:392px" width="28" height="28" viewBox="0 0 28 28"><path d="M14 28V18H11V14H14V11Q14 5 19 5H22V9H20Q18 9 18 11V14H22L21.5 18H18V28Z" fill="#fff"/></svg>
<div style="left:197px;top:445px;width:1484px;height:106px;background:#fff;border:1px solid #e2e2e2;border-bottom:2px solid #e2e2e2"></div>
<div style="left:198px;top:446px;width:1482px;height:32px;background:#f3f3f3"></div>
<svg style="position:absolute;left:206px;top:457px" width="10" height="10" viewBox="0 0 10 10"><path d="M1.8 1.8L8.2 8.2M8.2 1.8L1.8 8.2" stroke="#606060" stroke-width="2.2" stroke-linecap="square"/></svg>
<svg style="position:absolute;left:225px;top:459px" width="10" height="6" viewBox="0 0 10 6"><path d="M1 5L5 1L9 5Z" fill="#606060"/></svg>
<svg style="position:absolute;left:242px;top:456px" width="14" height="12" viewBox="0 0 14 12"><path d="M3 5A4.3 4.3 0 0 1 11 4.5M11 7A4.3 4.3 0 0 1 3 7.5" fill="none" stroke="#222" stroke-width="1"/><path d="M9.3 4.6H13.3L11.3 7Z M0.7 7.4H4.7L2.7 5Z" fill="#111"/></svg>
<div class="t" dir="rtl" style="right:264px;top:452.5px;font-size:14px;line-height:19px;color:#666;font-weight:normal;">أحدث التحميلات</div>
<svg style="position:absolute;left:1661px;top:455px" width="14" height="14" viewBox="0 0 14 14"><path d="M5 0H9V6H12L7 11L2 6H5Z" fill="#555"/><rect x="0" y="11" width="14" height="3" fill="#555"/></svg>
<div class="t" dir="rtl" style="right:248px;top:486.5px;font-size:15px;line-height:21px;color:#333;font-weight:normal;">يجب تسجيل الدخول ضمن موقع الشركة لتتمكن من تحميل أحدث الإصدارات</div>
<div class="t" dir="rtl" style="right:248px;top:522.5px;font-size:14px;line-height:19px;color:#4a8fd6;font-weight:normal;">موقع الشركة</div>
<div style="left:1691px;top:97px;width:1px;height:906px;background:#c9c9d6"></div>
<div style="left:1692px;top:97px;width:3px;height:906px;background:#f3f3f6"></div>
<div style="left:1695px;top:97px;width:1px;height:906px;background:#c9c9d6"></div>
<div style="left:1696px;top:97px;width:222px;height:906px;background:#eeedf2"></div>
<svg style="position:absolute;left:1700px;top:100px" width="220" height="45" viewBox="0 0 220 45"><path d="M9 9H31L35 13V36H28L27 35L26 36H11L7 32V24L11 20H28V15H9Z M15 26V30H28V26Z M35 9H43V29H58V36H39L35 32Z M58 9H80L84 13V36H77L76 35L75 36H60L56 32V24L60 20H77V15H58Z M64 26V30H77V26Z M86 9H122L126 13V36H119V17L117 15H110V36H102V15H94V36H86Z M139 9H153V15H137L133 19V20H153V26H133V27L137 31H153V36H139L128 30V15Z M166 9H180V15H164L160 19V20H180V26H160V27L164 31H180V36H166L155 30V15Z M182 9H204L208 13V36H201V17L199 15H190V36H182Z" fill="#00b4cc" fill-rule="evenodd"/></svg>
<div style="left:1696px;top:151px;width:222px;height:24px;background:#1c4587"></div>
<div style="left:1696px;top:967px;width:222px;height:7px;background:#e6e6ea"></div>
<svg style="position:absolute;left:1696px;top:967px" width="222" height="7" viewBox="0 0 222 7"><rect x="1" y="1" width="1" height="1" fill="#a4a4c4"/><rect x="3" y="3" width="1" height="1" fill="#a4a4c4"/><rect x="1" y="5" width="1" height="1" fill="#a4a4c4"/><rect x="5" y="1" width="1" height="1" fill="#a4a4c4"/><rect x="7" y="3" width="1" height="1" fill="#a4a4c4"/><rect x="5" y="5" width="1" height="1" fill="#a4a4c4"/><rect x="9" y="1" width="1" height="1" fill="#a4a4c4"/><rect x="11" y="3" width="1" height="1" fill="#a4a4c4"/><rect x="9" y="5" width="1" height="1" fill="#a4a4c4"/><rect x="13" y="1" width="1" height="1" fill="#a4a4c4"/><rect x="15" y="3" width="1" height="1" fill="#a4a4c4"/><rect x="13" y="5" width="1" height="1" fill="#a4a4c4"/><rect x="17" y="1" width="1" height="1" fill="#a4a4c4"/><rect x="19" y="3" width="1" height="1" fill="#a4a4c4"/><rect x="17" y="5" width="1" height="1" fill="#a4a4c4"/><rect x="21" y="1" width="1" height="1" fill="#a4a4c4"/><rect x="23" y="3" width="1" height="1" fill="#a4a4c4"/><rect x="21" y="5" width="1" height="1" fill="#a4a4c4"/><rect x="25" y="1" width="1" height="1" fill="#a4a4c4"/><rect x="27" y="3" width="1" height="1" fill="#a4a4c4"/><rect x="25" y="5" width="1" height="1" fill="#a4a4c4"/><rect x="29" y="1" width="1" height="1" fill="#a4a4c4"/><rect x="31" y="3" width="1" height="1" fill="#a4a4c4"/><rect x="29" y="5" width="1" height="1" fill="#a4a4c4"/><rect x="33" y="1" width="1" height="1" fill="#a4a4c4"/><rect x="35" y="3" width="1" height="1" fill="#a4a4c4"/><rect x="33" y="5" width="1" height="1" fill="#a4a4c4"/><rect x="37" y="1" width="1" height="1" fill="#a4a4c4"/><rect x="39" y="3" width="1" height="1" fill="#a4a4c4"/><rect x="37" y="5" width="1" height="1" fill="#a4a4c4"/><rect x="41" y="1" width="1" height="1" fill="#a4a4c4"/><rect x="43" y="3" width="1" height="1" fill="#a4a4c4"/><rect x="41" y="5" width="1" height="1" fill="#a4a4c4"/><rect x="45" y="1" width="1" height="1" fill="#a4a4c4"/><rect x="47" y="3" width="1" height="1" fill="#a4a4c4"/><rect x="45" y="5" width="1" height="1" fill="#a4a4c4"/><rect x="49" y="1" width="1" height="1" fill="#a4a4c4"/><rect x="51" y="3" width="1" height="1" fill="#a4a4c4"/><rect x="49" y="5" width="1" height="1" fill="#a4a4c4"/><rect x="53" y="1" width="1" height="1" fill="#a4a4c4"/><rect x="55" y="3" width="1" height="1" fill="#a4a4c4"/><rect x="53" y="5" width="1" height="1" fill="#a4a4c4"/><rect x="57" y="1" width="1" height="1" fill="#a4a4c4"/><rect x="59" y="3" width="1" height="1" fill="#a4a4c4"/><rect x="57" y="5" width="1" height="1" fill="#a4a4c4"/><rect x="61" y="1" width="1" height="1" fill="#a4a4c4"/><rect x="63" y="3" width="1" height="1" fill="#a4a4c4"/><rect x="61" y="5" width="1" height="1" fill="#a4a4c4"/><rect x="65" y="1" width="1" height="1" fill="#a4a4c4"/><rect x="67" y="3" width="1" height="1" fill="#a4a4c4"/><rect x="65" y="5" width="1" height="1" fill="#a4a4c4"/><rect x="69" y="1" width="1" height="1" fill="#a4a4c4"/><rect x="71" y="3" width="1" height="1" fill="#a4a4c4"/><rect x="69" y="5" width="1" height="1" fill="#a4a4c4"/><rect x="73" y="1" width="1" height="1" fill="#a4a4c4"/><rect x="75" y="3" width="1" height="1" fill="#a4a4c4"/><rect x="73" y="5" width="1" height="1" fill="#a4a4c4"/><rect x="77" y="1" width="1" height="1" fill="#a4a4c4"/><rect x="79" y="3" width="1" height="1" fill="#a4a4c4"/><rect x="77" y="5" width="1" height="1" fill="#a4a4c4"/><rect x="81" y="1" width="1" height="1" fill="#a4a4c4"/><rect x="83" y="3" width="1" height="1" fill="#a4a4c4"/><rect x="81" y="5" width="1" height="1" fill="#a4a4c4"/><rect x="85" y="1" width="1" height="1" fill="#a4a4c4"/><rect x="87" y="3" width="1" height="1" fill="#a4a4c4"/><rect x="85" y="5" width="1" height="1" fill="#a4a4c4"/><rect x="89" y="1" width="1" height="1" fill="#a4a4c4"/><rect x="91" y="3" width="1" height="1" fill="#a4a4c4"/><rect x="89" y="5" width="1" height="1" fill="#a4a4c4"/><rect x="93" y="1" width="1" height="1" fill="#a4a4c4"/><rect x="95" y="3" width="1" height="1" fill="#a4a4c4"/><rect x="93" y="5" width="1" height="1" fill="#a4a4c4"/><rect x="97" y="1" width="1" height="1" fill="#a4a4c4"/><rect x="99" y="3" width="1" height="1" fill="#a4a4c4"/><rect x="97" y="5" width="1" height="1" fill="#a4a4c4"/><rect x="101" y="1" width="1" height="1" fill="#a4a4c4"/><rect x="103" y="3" width="1" height="1" fill="#a4a4c4"/><rect x="101" y="5" width="1" height="1" fill="#a4a4c4"/><rect x="105" y="1" width="1" height="1" fill="#a4a4c4"/><rect x="107" y="3" width="1" height="1" fill="#a4a4c4"/><rect x="105" y="5" width="1" height="1" fill="#a4a4c4"/><rect x="109" y="1" width="1" height="1" fill="#a4a4c4"/><rect x="111" y="3" width="1" height="1" fill="#a4a4c4"/><rect x="109" y="5" width="1" height="1" fill="#a4a4c4"/><rect x="113" y="1" width="1" height="1" fill="#a4a4c4"/><rect x="115" y="3" width="1" height="1" fill="#a4a4c4"/><rect x="113" y="5" width="1" height="1" fill="#a4a4c4"/><rect x="117" y="1" width="1" height="1" fill="#a4a4c4"/><rect x="119" y="3" width="1" height="1" fill="#a4a4c4"/><rect x="117" y="5" width="1" height="1" fill="#a4a4c4"/><rect x="121" y="1" width="1" height="1" fill="#a4a4c4"/><rect x="123" y="3" width="1" height="1" fill="#a4a4c4"/><rect x="121" y="5" width="1" height="1" fill="#a4a4c4"/><rect x="125" y="1" width="1" height="1" fill="#a4a4c4"/><rect x="127" y="3" width="1" height="1" fill="#a4a4c4"/><rect x="125" y="5" width="1" height="1" fill="#a4a4c4"/><rect x="129" y="1" width="1" height="1" fill="#a4a4c4"/><rect x="131" y="3" width="1" height="1" fill="#a4a4c4"/><rect x="129" y="5" width="1" height="1" fill="#a4a4c4"/><rect x="133" y="1" width="1" height="1" fill="#a4a4c4"/><rect x="135" y="3" width="1" height="1" fill="#a4a4c4"/><rect x="133" y="5" width="1" height="1" fill="#a4a4c4"/><rect x="137" y="1" width="1" height="1" fill="#a4a4c4"/><rect x="139" y="3" width="1" height="1" fill="#a4a4c4"/><rect x="137" y="5" width="1" height="1" fill="#a4a4c4"/><rect x="141" y="1" width="1" height="1" fill="#a4a4c4"/><rect x="143" y="3" width="1" height="1" fill="#a4a4c4"/><rect x="141" y="5" width="1" height="1" fill="#a4a4c4"/><rect x="145" y="1" width="1" height="1" fill="#a4a4c4"/><rect x="147" y="3" width="1" height="1" fill="#a4a4c4"/><rect x="145" y="5" width="1" height="1" fill="#a4a4c4"/><rect x="149" y="1" width="1" height="1" fill="#a4a4c4"/><rect x="151" y="3" width="1" height="1" fill="#a4a4c4"/><rect x="149" y="5" width="1" height="1" fill="#a4a4c4"/><rect x="153" y="1" width="1" height="1" fill="#a4a4c4"/><rect x="155" y="3" width="1" height="1" fill="#a4a4c4"/><rect x="153" y="5" width="1" height="1" fill="#a4a4c4"/><rect x="157" y="1" width="1" height="1" fill="#a4a4c4"/><rect x="159" y="3" width="1" height="1" fill="#a4a4c4"/><rect x="157" y="5" width="1" height="1" fill="#a4a4c4"/><rect x="161" y="1" width="1" height="1" fill="#a4a4c4"/><rect x="163" y="3" width="1" height="1" fill="#a4a4c4"/><rect x="161" y="5" width="1" height="1" fill="#a4a4c4"/><rect x="165" y="1" width="1" height="1" fill="#a4a4c4"/><rect x="167" y="3" width="1" height="1" fill="#a4a4c4"/><rect x="165" y="5" width="1" height="1" fill="#a4a4c4"/><rect x="169" y="1" width="1" height="1" fill="#a4a4c4"/><rect x="171" y="3" width="1" height="1" fill="#a4a4c4"/><rect x="169" y="5" width="1" height="1" fill="#a4a4c4"/><rect x="173" y="1" width="1" height="1" fill="#a4a4c4"/><rect x="175" y="3" width="1" height="1" fill="#a4a4c4"/><rect x="173" y="5" width="1" height="1" fill="#a4a4c4"/><rect x="177" y="1" width="1" height="1" fill="#a4a4c4"/><rect x="179" y="3" width="1" height="1" fill="#a4a4c4"/><rect x="177" y="5" width="1" height="1" fill="#a4a4c4"/><rect x="181" y="1" width="1" height="1" fill="#a4a4c4"/><rect x="183" y="3" width="1" height="1" fill="#a4a4c4"/><rect x="181" y="5" width="1" height="1" fill="#a4a4c4"/><rect x="185" y="1" width="1" height="1" fill="#a4a4c4"/><rect x="187" y="3" width="1" height="1" fill="#a4a4c4"/><rect x="185" y="5" width="1" height="1" fill="#a4a4c4"/><rect x="189" y="1" width="1" height="1" fill="#a4a4c4"/><rect x="191" y="3" width="1" height="1" fill="#a4a4c4"/><rect x="189" y="5" width="1" height="1" fill="#a4a4c4"/><rect x="193" y="1" width="1" height="1" fill="#a4a4c4"/><rect x="195" y="3" width="1" height="1" fill="#a4a4c4"/><rect x="193" y="5" width="1" height="1" fill="#a4a4c4"/><rect x="197" y="1" width="1" height="1" fill="#a4a4c4"/><rect x="199" y="3" width="1" height="1" fill="#a4a4c4"/><rect x="197" y="5" width="1" height="1" fill="#a4a4c4"/><rect x="201" y="1" width="1" height="1" fill="#a4a4c4"/><rect x="203" y="3" width="1" height="1" fill="#a4a4c4"/><rect x="201" y="5" width="1" height="1" fill="#a4a4c4"/><rect x="205" y="1" width="1" height="1" fill="#a4a4c4"/><rect x="207" y="3" width="1" height="1" fill="#a4a4c4"/><rect x="205" y="5" width="1" height="1" fill="#a4a4c4"/><rect x="209" y="1" width="1" height="1" fill="#a4a4c4"/><rect x="211" y="3" width="1" height="1" fill="#a4a4c4"/><rect x="209" y="5" width="1" height="1" fill="#a4a4c4"/><rect x="213" y="1" width="1" height="1" fill="#a4a4c4"/><rect x="215" y="3" width="1" height="1" fill="#a4a4c4"/><rect x="213" y="5" width="1" height="1" fill="#a4a4c4"/><rect x="217" y="1" width="1" height="1" fill="#a4a4c4"/><rect x="219" y="3" width="1" height="1" fill="#a4a4c4"/><rect x="217" y="5" width="1" height="1" fill="#a4a4c4"/><rect x="221" y="1" width="1" height="1" fill="#a4a4c4"/><rect x="223" y="3" width="1" height="1" fill="#a4a4c4"/><rect x="221" y="5" width="1" height="1" fill="#a4a4c4"/></svg>
<div style="left:1696px;top:973px;width:222px;height:30px;background:#e1e1e1"></div>
<svg style="position:absolute;left:1704px;top:981px" width="10" height="15" viewBox="0 0 10 15"><path d="M4.5 1.5L1.2 4.2L4.5 7M8 1.5L4.7 4.2L8 7" fill="none" stroke="#555" stroke-width="1"/><path d="M1 10H8L4.5 13.5Z" fill="#555"/></svg>
<div style="left:1918px;top:97px;width:2px;height:908px;background:#fff"></div>
<div style="left:0px;top:1003px;width:1920px;height:2px;background:#fff"></div>
<div style="left:493px;top:234px;width:933px;height:603px;box-shadow:0 4px 20px rgba(0,0,0,0.3);background:#f0f0f0;border:1px solid #646464"></div>
<div style="left:494px;top:235px;width:931px;height:37px;background:#fff"></div>
<div class="t" dir="ltr" style="left:503px;top:243.5px;font-size:15px;line-height:21px;color:#000;font-weight:normal;direction:rtl;unicode-bidi:plaintext">عملية تصنيع</div>
<svg style="position:absolute;left:1398px;top:247px" width="13" height="13" viewBox="0 0 13 13"><path d="M0.5 0.5L12.5 12.5M12.5 0.5L0.5 12.5" stroke="#111" stroke-width="1.2"/></svg>
<div style="left:500px;top:278px;width:23px;height:26px;background:#cccccc;border:1px solid #c2c2c2"></div>
<svg style="position:absolute;left:500px;top:279px" width="23" height="24" viewBox="0 0 23 24"><path d="M4 6V18" stroke="#a8a8a8" stroke-width="2.4"/><path d="M12 7L7 12L12 17M18 7L13 12L18 17" fill="none" stroke="#a8a8a8" stroke-width="3.3"/></svg>
<div style="left:525px;top:278px;width:23px;height:26px;background:#cccccc;border:1px solid #c2c2c2"></div>
<svg style="position:absolute;left:525px;top:279px" width="23" height="24" viewBox="0 0 23 24"><path d="M12 7L7 12L12 17M18 7L13 12L18 17" fill="none" stroke="#a8a8a8" stroke-width="3.3"/></svg>
<div style="left:550px;top:278px;width:23px;height:26px;background:#cccccc;border:1px solid #c2c2c2"></div>
<svg style="position:absolute;left:550px;top:279px" width="23" height="24" viewBox="0 0 23 24"><path d="M14 7L9 12L14 17" fill="none" stroke="#a8a8a8" stroke-width="3.3"/></svg>
<div style="left:652px;top:278px;width:23px;height:26px;background:#cccccc;border:1px solid #c2c2c2"></div>
<svg style="position:absolute;left:652px;top:279px" width="23" height="24" viewBox="0 0 23 24"><path d="M9 7L14 12L9 17" fill="none" stroke="#a8a8a8" stroke-width="3.3"/></svg>
<div style="left:677px;top:278px;width:23px;height:26px;background:#cccccc;border:1px solid #c2c2c2"></div>
<svg style="position:absolute;left:677px;top:279px" width="23" height="24" viewBox="0 0 23 24"><path d="M5 7L10 12L5 17M11 7L16 12L11 17" fill="none" stroke="#a8a8a8" stroke-width="3.3"/></svg>
<div style="left:702px;top:278px;width:23px;height:26px;background:#cccccc;border:1px solid #c2c2c2"></div>
<svg style="position:absolute;left:702px;top:279px" width="23" height="24" viewBox="0 0 23 24"><path d="M19 6V18" stroke="#a8a8a8" stroke-width="2.2"/><path d="M5 7L10 12L5 17M11 7L16 12L11 17" fill="none" stroke="#a8a8a8" stroke-width="3.3"/></svg>
<div style="left:575px;top:278px;width:75px;height:26px;background:#fff;border:1px solid #7a7a7a"></div>
<div class="t" dir="ltr" style="left:581px;top:278.5px;font-size:15px;line-height:21px;color:#000;font-weight:normal;">*1</div>
<div style="left:957px;top:290px;width:16px;height:16px;background:#fff;border:1px solid #333"></div>
<svg style="position:absolute;left:958px;top:291px" width="14" height="14" viewBox="0 0 14 14"><path d="M2.5 7L5.5 10.5L11.5 3.5" fill="none" stroke="#333" stroke-width="1.2"/></svg>
<div class="t" dir="rtl" style="right:967px;top:290.0px;font-size:13px;line-height:18px;color:#000;font-weight:normal;">توليد قيد بالتكاليف الإضافية</div>
<svg style="position:absolute;left:650px;top:316px" width="17" height="20" viewBox="0 0 17 20"><path d="M8.5 0.5L16.5 3V9Q16.5 16 8.5 19.5Q0.5 16 0.5 9V3Z" fill="#7cc242"/><path d="M4.5 10L7.5 13L12.5 6.5" fill="none" stroke="#fff" stroke-width="2.2"/></svg>
<div class="t" dir="rtl" style="right:1275px;top:316.0px;font-size:13px;line-height:18px;color:#000;font-weight:normal;">درجة السرية</div>
<div style="left:1003px;top:292px;width:254px;height:26px;background:#fff;border:1px solid #0078d7"></div>
<div class="t" dir="rtl" style="right:667px;top:296.0px;font-size:13px;line-height:18px;color:#2a86de;font-weight:normal;">1001-طاولة خشب</div>
<svg style="position:absolute;left:1005px;top:294px" width="24" height="22" viewBox="0 0 24 22"><rect x="0" y="0" width="24" height="22" fill="#ececec"/><circle cx="13" cy="9" r="5.5" fill="#cfe8fb" stroke="#9fb4c8" stroke-width="1.4"/><path d="M9 13L4 18" stroke="#9fb4c8" stroke-width="2.6" stroke-linecap="round"/></svg>
<div style="left:1082px;top:322px;width:175px;height:26px;background:#fff;border:1px solid #7a7a7a"></div>
<div class="t" dir="rtl" style="right:667px;top:325.0px;font-size:13px;line-height:18px;color:#1a1a1a;font-weight:normal;">10.00</div>
<div style="left:1003px;top:352px;width:254px;height:26px;background:#f0f0f0;border:1px solid #7a7a7a"></div>
<div style="left:1082px;top:382px;width:175px;height:26px;background:#fff;border:1px solid #7a7a7a"></div>
<div class="t" dir="rtl" style="right:667px;top:385.0px;font-size:13px;line-height:18px;color:#1a1a1a;font-weight:normal;">10.00</div>
<div style="left:1082px;top:412px;width:175px;height:26px;background:#f0f0f0;border:1px solid #7a7a7a"></div>
<div class="t" dir="rtl" style="left:869.5px;width:600px;text-align:center;top:416.0px;font-size:13px;line-height:18px;color:#1a1a1a;font-weight:normal;">قطعة</div>
<div style="left:1138px;top:442px;width:117px;height:26px;background:#fff;border:1px solid #7a7a7a"></div>
<div class="t" dir="rtl" style="right:668px;top:445.0px;font-size:13px;line-height:18px;color:#1a1a1a;font-weight:normal;">17-4-2025</div>
<svg style="position:absolute;left:1141px;top:444px" width="21" height="21" viewBox="0 0 21 21"><rect x="0" y="0" width="21" height="21" fill="#efefef"/><rect x="1.5" y="2.5" width="18" height="17" fill="#eee" stroke="#999"/><rect x="1" y="2" width="19" height="4" fill="#1f6fb8"/><rect x="4" y="9.0" width="2" height="2" fill="#aaa"/><rect x="8" y="9.0" width="2" height="2" fill="#aaa"/><rect x="12" y="9.0" width="2" height="2" fill="#aaa"/><rect x="16" y="9.0" width="2" height="2" fill="#aaa"/><rect x="4" y="12.5" width="2" height="2" fill="#aaa"/><rect x="8" y="12.5" width="2" height="2" fill="#aaa"/><rect x="12" y="12.5" width="2" height="2" fill="#aaa"/><rect x="16" y="12.5" width="2" height="2" fill="#aaa"/><rect x="4" y="16.0" width="2" height="2" fill="#aaa"/><rect x="8" y="16.0" width="2" height="2" fill="#aaa"/><rect x="12" y="16.0" width="2" height="2" fill="#aaa"/><rect x="16" y="16.0" width="2" height="2" fill="#aaa"/></svg>
<div class="t" dir="ltr" style="left:1262px;top:294.0px;font-size:13px;line-height:18px;color:#1a1a1a;font-weight:normal;direction:rtl;unicode-bidi:plaintext">النموذج</div>
<div class="t" dir="ltr" style="left:1262px;top:323.5px;font-size:13px;line-height:18px;color:#1a1a1a;font-weight:normal;direction:rtl;unicode-bidi:plaintext">عدد النماذج المصنعة</div>
<div class="t" dir="ltr" style="left:1262px;top:354.0px;font-size:13px;line-height:18px;color:#1a1a1a;font-weight:normal;direction:rtl;unicode-bidi:plaintext">المادة المصنعة</div>
<div class="t" dir="ltr" style="left:1262px;top:384.0px;font-size:13px;line-height:18px;color:#1a1a1a;font-weight:normal;direction:rtl;unicode-bidi:plaintext">كمية المادة المصنعة</div>
<div class="t" dir="ltr" style="left:1262px;top:420.0px;font-size:13px;line-height:18px;color:#1a1a1a;font-weight:normal;direction:rtl;unicode-bidi:plaintext">الوحدة</div>
<div class="t" dir="ltr" style="left:1262px;top:448.0px;font-size:13px;line-height:18px;color:#1a1a1a;font-weight:normal;direction:rtl;unicode-bidi:plaintext">التاريخ</div>
<div style="left:569px;top:350px;width:340px;height:26px;background:#fff;border:1px solid #7a7a7a"></div>
<div style="left:734px;top:380px;width:175px;height:26px;background:#fff;border:1px solid #7a7a7a"></div>
<div class="t" dir="rtl" style="right:1017px;top:383.0px;font-size:13px;line-height:18px;color:#1a1a1a;font-weight:normal;">250.00</div>
<div style="left:734px;top:410px;width:175px;height:24px;background:#e1e1e1;border:1px solid #adadad"></div>
<div class="t" dir="rtl" style="right:1014px;top:413.0px;font-size:13px;line-height:18px;color:#000;font-weight:normal;">ريال سعودي</div>
<svg style="position:absolute;left:740px;top:418.0px" width="11" height="7" viewBox="0 0 11 7"><path d="M0.5 0.5L5.5 5.5L10.5 0.5" fill="none" stroke="#444" stroke-width="1"/></svg>
<div style="left:734px;top:438px;width:86px;height:26px;background:#fff;border:1px solid #7a7a7a"></div>
<div class="t" dir="rtl" style="right:1106px;top:441.0px;font-size:13px;line-height:18px;color:#1a1a1a;font-weight:normal;">1.00000</div>
<div style="left:819px;top:438px;width:90px;height:26px;background:#fff;border:1px solid #7a7a7a"></div>
<div class="t" dir="rtl" style="right:1017px;top:441.0px;font-size:13px;line-height:18px;color:#1a1a1a;font-weight:normal;">1.00000</div>
<div style="left:522px;top:388px;width:124px;height:26px;background:#f0f0f0;border:1px solid #7a7a7a"></div>
<div class="t" dir="rtl" style="right:1280px;top:391.0px;font-size:13px;line-height:18px;color:#1a1a1a;font-weight:normal;">1</div>
<div style="left:522px;top:416px;width:124px;height:26px;background:#fff;border:1px solid #7a7a7a"></div>
<div class="t" dir="ltr" style="left:918px;top:354.0px;font-size:13px;line-height:18px;color:#1a1a1a;font-weight:normal;direction:rtl;unicode-bidi:plaintext">ملاحظات</div>
<div class="t" dir="ltr" style="left:918px;top:384.5px;font-size:13px;line-height:18px;color:#1a1a1a;font-weight:normal;direction:rtl;unicode-bidi:plaintext">زمن الإنتاج</div>
<div class="t" dir="ltr" style="left:918px;top:413.0px;font-size:13px;line-height:18px;color:#1a1a1a;font-weight:normal;direction:rtl;unicode-bidi:plaintext">العملة</div>
<div class="t" dir="ltr" style="left:918px;top:443.0px;font-size:13px;line-height:18px;color:#1a1a1a;font-weight:normal;direction:rtl;unicode-bidi:plaintext">التعادل</div>
<div class="t" dir="ltr" style="left:653px;top:389.5px;font-size:13px;line-height:18px;color:#1a1a1a;font-weight:normal;direction:rtl;unicode-bidi:plaintext">رقم المرحلة</div>
<div class="t" dir="ltr" style="left:653px;top:421.0px;font-size:13px;line-height:18px;color:#1a1a1a;font-weight:normal;direction:rtl;unicode-bidi:plaintext">رقم الطبخة</div>
<div style="left:503px;top:486px;width:462px;height:255px;border:1px solid #dcdcdc"></div>
<div style="left:979px;top:486px;width:432px;height:255px;border:1px solid #dcdcdc"></div>
<div style="left:877px;top:478px;width:84px;height:16px;background:#f0f0f0"></div>
<div class="t" dir="rtl" style="right:963px;top:477.5px;font-size:13px;line-height:18px;color:#000;font-weight:normal;">المواد المصنعة</div>
<div style="left:1334px;top:478px;width:73px;height:16px;background:#f0f0f0"></div>
<div class="t" dir="rtl" style="right:516px;top:477.5px;font-size:13px;line-height:18px;color:#000;font-weight:normal;">المواد الأولية</div>
<div style="left:1131px;top:500px;width:117px;height:26px;background:#fff;border:1px solid #7a7a7a"></div>
<div class="t" dir="rtl" style="right:675px;top:503.0px;font-size:13px;line-height:18px;color:#1a1a1a;font-weight:normal;">17-4-2025</div>
<svg style="position:absolute;left:1134px;top:502px" width="21" height="21" viewBox="0 0 21 21"><rect x="0" y="0" width="21" height="21" fill="#efefef"/><rect x="1.5" y="2.5" width="18" height="17" fill="#eee" stroke="#999"/><rect x="1" y="2" width="19" height="4" fill="#1f6fb8"/><rect x="4" y="9.0" width="2" height="2" fill="#aaa"/><rect x="8" y="9.0" width="2" height="2" fill="#aaa"/><rect x="12" y="9.0" width="2" height="2" fill="#aaa"/><rect x="16" y="9.0" width="2" height="2" fill="#aaa"/><rect x="4" y="12.5" width="2" height="2" fill="#aaa"/><rect x="8" y="12.5" width="2" height="2" fill="#aaa"/><rect x="12" y="12.5" width="2" height="2" fill="#aaa"/><rect x="16" y="12.5" width="2" height="2" fill="#aaa"/><rect x="4" y="16.0" width="2" height="2" fill="#aaa"/><rect x="8" y="16.0" width="2" height="2" fill="#aaa"/><rect x="12" y="16.0" width="2" height="2" fill="#aaa"/><rect x="16" y="16.0" width="2" height="2" fill="#aaa"/></svg>
<div style="left:995px;top:528px;width:254px;height:25px;background:#fff;border:1px solid #7a7a7a"></div>
<div class="t" dir="rtl" style="right:674px;top:531.5px;font-size:13px;line-height:18px;color:#1a1a1a;font-weight:normal;">6-مستودع المواد الأولية</div>
<svg style="position:absolute;left:997px;top:530px" width="24" height="22" viewBox="0 0 24 22"><rect x="0" y="0" width="24" height="22" fill="#ececec"/><circle cx="13" cy="9" r="5.5" fill="#cfe8fb" stroke="#9fb4c8" stroke-width="1.4"/><path d="M9 13L4 18" stroke="#9fb4c8" stroke-width="2.6" stroke-linecap="round"/></svg>
<div style="left:995px;top:558px;width:254px;height:25px;background:#fff;border:1px solid #7a7a7a"></div>
<svg style="position:absolute;left:997px;top:560px" width="24" height="22" viewBox="0 0 24 22"><rect x="0" y="0" width="24" height="22" fill="#ececec"/><circle cx="13" cy="9" r="5.5" fill="#cfe8fb" stroke="#9fb4c8" stroke-width="1.4"/><path d="M9 13L4 18" stroke="#9fb4c8" stroke-width="2.6" stroke-linecap="round"/></svg>
<div style="left:995px;top:588px;width:254px;height:25px;background:#fff;border:1px solid #7a7a7a"></div>
<div class="t" dir="rtl" style="left:822.0px;width:600px;text-align:center;top:591.5px;font-size:13px;line-height:18px;color:#8a8a8a;font-weight:normal;">تفصيلية</div>
<svg style="position:absolute;left:997px;top:590px" width="24" height="22" viewBox="0 0 24 22"><rect x="0" y="0" width="24" height="22" fill="#ececec"/><circle cx="13" cy="9" r="5.5" fill="#cfe8fb" stroke="#9fb4c8" stroke-width="1.4"/><path d="M9 13L4 18" stroke="#9fb4c8" stroke-width="2.6" stroke-linecap="round"/></svg>
<div style="left:995px;top:616px;width:254px;height:26px;background:#fff;border:1px solid #7a7a7a"></div>
<div class="t" dir="rtl" style="right:674px;top:620.0px;font-size:13px;line-height:18px;color:#1a1a1a;font-weight:normal;">84-وسيط إخراج</div>
<svg style="position:absolute;left:997px;top:618px" width="24" height="22" viewBox="0 0 24 22"><rect x="0" y="0" width="24" height="22" fill="#ececec"/><circle cx="13" cy="9" r="5.5" fill="#cfe8fb" stroke="#9fb4c8" stroke-width="1.4"/><path d="M9 13L4 18" stroke="#9fb4c8" stroke-width="2.6" stroke-linecap="round"/></svg>
<div style="left:995px;top:644px;width:254px;height:24px;background:#e1e1e1;border:1px solid #adadad"></div>
<div class="t" dir="rtl" style="right:674px;top:647.0px;font-size:13px;line-height:18px;color:#000;font-weight:normal;">الوسطى</div>
<svg style="position:absolute;left:1001px;top:652.0px" width="11" height="7" viewBox="0 0 11 7"><path d="M0.5 0.5L5.5 5.5L10.5 0.5" fill="none" stroke="#444" stroke-width="1"/></svg>
<div style="left:1073px;top:678px;width:175px;height:26px;background:#f0f0f0;border:1px solid #7a7a7a"></div>
<div class="t" dir="rtl" style="right:678px;top:681.0px;font-size:13px;line-height:18px;color:#1a1a1a;font-weight:normal;">110.44</div>
<div style="left:1255px;top:678px;width:112px;height:26px;background:#e1e1e1;border:1px solid #adadad"></div>
<div class="t" dir="rtl" style="left:1005px;width:600px;text-align:center;top:682.0px;font-size:13px;line-height:18px;color:#1a1a1a;font-weight:normal;">فاتورة إخراج</div>
<svg style="position:absolute;left:1354px;top:688px" width="9" height="7" viewBox="0 0 9 7"><path d="M0 0H9L4.5 7Z" fill="#111"/></svg>
<div class="t" dir="ltr" style="left:1254px;top:504.0px;font-size:13px;line-height:18px;color:#1a1a1a;font-weight:normal;direction:rtl;unicode-bidi:plaintext">تاريخ الإخراج</div>
<div class="t" dir="ltr" style="left:1254px;top:531.0px;font-size:13px;line-height:18px;color:#1a1a1a;font-weight:normal;direction:rtl;unicode-bidi:plaintext">المستودع</div>
<div class="t" dir="ltr" style="left:1254px;top:561.0px;font-size:13px;line-height:18px;color:#1a1a1a;font-weight:normal;direction:rtl;unicode-bidi:plaintext">مركز الكلفة</div>
<div class="t" dir="ltr" style="left:1254px;top:590.0px;font-size:13px;line-height:18px;color:#1a1a1a;font-weight:normal;direction:rtl;unicode-bidi:plaintext">حساب الإخراج</div>
<div class="t" dir="ltr" style="left:1254px;top:617.6px;font-size:13px;line-height:18px;color:#1a1a1a;font-weight:normal;direction:rtl;unicode-bidi:plaintext">الحساب الوسيط</div>
<div class="t" dir="ltr" style="left:1254px;top:648.0px;font-size:13px;line-height:18px;color:#1a1a1a;font-weight:normal;direction:rtl;unicode-bidi:plaintext">سياسة التسعير</div>
<div style="left:662px;top:500px;width:117px;height:24px;background:#fff;border:1px solid #7a7a7a"></div>
<div class="t" dir="rtl" style="right:1144px;top:502.0px;font-size:13px;line-height:18px;color:#1a1a1a;font-weight:normal;">17-4-2025</div>
<svg style="position:absolute;left:665px;top:501px" width="21" height="21" viewBox="0 0 21 21"><rect x="0" y="0" width="21" height="21" fill="#efefef"/><rect x="1.5" y="2.5" width="18" height="17" fill="#eee" stroke="#999"/><rect x="1" y="2" width="19" height="4" fill="#1f6fb8"/><rect x="4" y="9.0" width="2" height="2" fill="#aaa"/><rect x="8" y="9.0" width="2" height="2" fill="#aaa"/><rect x="12" y="9.0" width="2" height="2" fill="#aaa"/><rect x="16" y="9.0" width="2" height="2" fill="#aaa"/><rect x="4" y="12.5" width="2" height="2" fill="#aaa"/><rect x="8" y="12.5" width="2" height="2" fill="#aaa"/><rect x="12" y="12.5" width="2" height="2" fill="#aaa"/><rect x="16" y="12.5" width="2" height="2" fill="#aaa"/><rect x="4" y="16.0" width="2" height="2" fill="#aaa"/><rect x="8" y="16.0" width="2" height="2" fill="#aaa"/><rect x="12" y="16.0" width="2" height="2" fill="#aaa"/><rect x="16" y="16.0" width="2" height="2" fill="#aaa"/></svg>
<div style="left:526px;top:526px;width:254px;height:24px;background:#fff;border:1px solid #7a7a7a"></div>
<div class="t" dir="rtl" style="right:1143px;top:529.0px;font-size:13px;line-height:18px;color:#1a1a1a;font-weight:normal;">7-مستودع المواد الجاهزة</div>
<svg style="position:absolute;left:528px;top:527px" width="24" height="22" viewBox="0 0 24 22"><rect x="0" y="0" width="24" height="22" fill="#ececec"/><circle cx="13" cy="9" r="5.5" fill="#cfe8fb" stroke="#9fb4c8" stroke-width="1.4"/><path d="M9 13L4 18" stroke="#9fb4c8" stroke-width="2.6" stroke-linecap="round"/></svg>
<div style="left:526px;top:556px;width:254px;height:24px;background:#fff;border:1px solid #7a7a7a"></div>
<svg style="position:absolute;left:528px;top:557px" width="24" height="22" viewBox="0 0 24 22"><rect x="0" y="0" width="24" height="22" fill="#ececec"/><circle cx="13" cy="9" r="5.5" fill="#cfe8fb" stroke="#9fb4c8" stroke-width="1.4"/><path d="M9 13L4 18" stroke="#9fb4c8" stroke-width="2.6" stroke-linecap="round"/></svg>
<div style="left:526px;top:586px;width:254px;height:24px;background:#fff;border:1px solid #7a7a7a"></div>
<div class="t" dir="rtl" style="left:353.0px;width:600px;text-align:center;top:589.0px;font-size:13px;line-height:18px;color:#8a8a8a;font-weight:normal;">تفصيلية</div>
<svg style="position:absolute;left:528px;top:587px" width="24" height="22" viewBox="0 0 24 22"><rect x="0" y="0" width="24" height="22" fill="#ececec"/><circle cx="13" cy="9" r="5.5" fill="#cfe8fb" stroke="#9fb4c8" stroke-width="1.4"/><path d="M9 13L4 18" stroke="#9fb4c8" stroke-width="2.6" stroke-linecap="round"/></svg>
<div style="left:526px;top:616px;width:254px;height:24px;background:#fff;border:1px solid #7a7a7a"></div>
<div class="t" dir="rtl" style="right:1143px;top:619.0px;font-size:13px;line-height:18px;color:#1a1a1a;font-weight:normal;">83-وسيط إدخال</div>
<svg style="position:absolute;left:528px;top:617px" width="24" height="22" viewBox="0 0 24 22"><rect x="0" y="0" width="24" height="22" fill="#ececec"/><circle cx="13" cy="9" r="5.5" fill="#cfe8fb" stroke="#9fb4c8" stroke-width="1.4"/><path d="M9 13L4 18" stroke="#9fb4c8" stroke-width="2.6" stroke-linecap="round"/></svg>
<div style="left:526px;top:646px;width:254px;height:26px;background:#f0f0f0;border:1px solid #7a7a7a"></div>
<div class="t" dir="rtl" style="right:1146px;top:649.0px;font-size:13px;line-height:18px;color:#1a1a1a;font-weight:normal;">11.04</div>
<div style="left:526px;top:676px;width:254px;height:26px;background:#f0f0f0;border:1px solid #7a7a7a"></div>
<div class="t" dir="rtl" style="right:1146px;top:679.0px;font-size:13px;line-height:18px;color:#1a1a1a;font-weight:normal;">110.44</div>
<div style="left:526px;top:710px;width:254px;height:26px;background:#f0f0f0;border:1px solid #7a7a7a"></div>
<div class="t" dir="rtl" style="right:1146px;top:713.0px;font-size:13px;line-height:18px;color:#1a1a1a;font-weight:normal;">110.44</div>
<div style="left:788px;top:704px;width:110px;height:32px;background:#e1e1e1;border:1px solid #adadad"></div>
<div class="t" dir="rtl" style="left:543.0px;width:600px;text-align:center;top:711.0px;font-size:13px;line-height:18px;color:#1a1a1a;font-weight:normal;">فاتورة الإدخال</div>
<div style="left:786px;top:746px;width:112px;height:30px;background:#e1e1e1;border:1px solid #adadad"></div>
<div class="t" dir="rtl" style="left:542.0px;width:600px;text-align:center;top:752.0px;font-size:13px;line-height:18px;color:#1a1a1a;font-weight:normal;">نموذج</div>
<div style="left:1297px;top:748px;width:112px;height:30px;background:#cccccc;border:1px solid #c4c4c4"></div>
<div class="t" dir="rtl" style="left:1065px;width:600px;text-align:center;top:754.0px;font-size:13px;line-height:18px;color:#9a9a9a;font-weight:normal;">الوثائق</div>
<div class="t" dir="ltr" style="left:785px;top:503.0px;font-size:13px;line-height:18px;color:#1a1a1a;font-weight:normal;direction:rtl;unicode-bidi:plaintext">تاريخ الإدخال</div>
<div class="t" dir="ltr" style="left:785px;top:529.5px;font-size:13px;line-height:18px;color:#1a1a1a;font-weight:normal;direction:rtl;unicode-bidi:plaintext">المستودع</div>
<div class="t" dir="ltr" style="left:785px;top:559.7px;font-size:13px;line-height:18px;color:#1a1a1a;font-weight:normal;direction:rtl;unicode-bidi:plaintext">مركز الكلفة</div>
<div class="t" dir="ltr" style="left:785px;top:589.3px;font-size:13px;line-height:18px;color:#1a1a1a;font-weight:normal;direction:rtl;unicode-bidi:plaintext">حساب الإدخال</div>
<div class="t" dir="ltr" style="left:785px;top:617.7px;font-size:13px;line-height:18px;color:#1a1a1a;font-weight:normal;direction:rtl;unicode-bidi:plaintext">الحساب الوسيط</div>
<div class="t" dir="ltr" style="left:785px;top:648.3px;font-size:13px;line-height:18px;color:#1a1a1a;font-weight:normal;direction:rtl;unicode-bidi:plaintext">الإفرادي</div>
<div class="t" dir="ltr" style="left:785px;top:678.5px;font-size:13px;line-height:18px;color:#1a1a1a;font-weight:normal;direction:rtl;unicode-bidi:plaintext">الإجمالي</div>
<div style="left:494px;top:782px;width:931px;height:1px;background:#a0a0a0"></div>
<div style="left:494px;top:783px;width:931px;height:1px;background:#fff"></div>
<div style="left:499px;top:796px;width:96px;height:32px;background:#e1e1e1;border:1px solid #adadad"></div>
<div class="t" dir="rtl" style="left:254px;width:600px;text-align:center;top:803.0px;font-size:13px;line-height:18px;color:#1a1a1a;font-weight:normal;">إغلاق</div>
<svg style="position:absolute;left:504px;top:804px" width="16" height="16" viewBox="0 0 16 16"><circle cx="8" cy="8" r="8" fill="#c8202e"/><path d="M4.8 4.8L11.2 11.2M11.2 4.8L4.8 11.2" stroke="#fff" stroke-width="2.4"/></svg>
<div style="left:601px;top:796px;width:96px;height:32px;background:#e1e1e1;border:1px solid #adadad"></div>
<div class="t" dir="rtl" style="left:356px;width:600px;text-align:center;top:803.0px;font-size:13px;line-height:18px;color:#1a1a1a;font-weight:normal;">معاينة</div>
<svg style="position:absolute;left:606px;top:804px" width="16" height="16" viewBox="0 0 16 16"><path d="M4 0.7H12.3V15.3H0.7V4Z" fill="#fff" stroke="#cfcfcf" stroke-width="1.3"/><path d="M4 0.7V4H0.7Z" fill="#c8c8c8" stroke="#cfcfcf" stroke-width="1"/><circle cx="11" cy="10" r="3" fill="none" stroke="#1a6fbe" stroke-width="2"/><path d="M13 12L15.5 14.5" stroke="#1a6fbe" stroke-width="2"/></svg>
<div style="left:702px;top:796px;width:96px;height:32px;background:#e1e1e1;border:1px solid #adadad"></div>
<div class="t" dir="rtl" style="left:457px;width:600px;text-align:center;top:803.0px;font-size:13px;line-height:18px;color:#1a1a1a;font-weight:normal;">طباعة</div>
<svg style="position:absolute;left:707px;top:804px" width="16" height="16" viewBox="0 0 16 16"><rect x="4" y="0" width="8" height="4" fill="#fff" stroke="#555"/><rect x="0" y="4" width="16" height="8" rx="1" fill="#1e9be0"/><rect x="4" y="10" width="8" height="6" fill="#fff" stroke="#555"/></svg>
<div style="left:804px;top:796px;width:96px;height:32px;background:#e1e1e1;border:1px solid #adadad"></div>
<div class="t" dir="rtl" style="left:559px;width:600px;text-align:center;top:803.0px;font-size:13px;line-height:18px;color:#1a1a1a;font-weight:normal;">الكميات</div>
<svg style="position:absolute;left:809px;top:804px" width="16" height="16" viewBox="0 0 16 16"><circle cx="5" cy="4" r="3" fill="none" stroke="#2a86de" stroke-width="2"/><rect x="1" y="9" width="9" height="7" fill="#d9b07a"/><rect x="4.5" y="7" width="1.5" height="6" fill="#2a86de"/></svg>
<div style="left:905px;top:796px;width:105px;height:32px;background:#e1e1e1;border:1px solid #adadad"></div>
<div class="t" dir="rtl" style="left:657px;width:600px;text-align:center;top:803.0px;font-size:13px;line-height:18px;color:#1a1a1a;font-weight:normal;">المزيد</div>
<div style="left:1016px;top:796px;width:96px;height:32px;background:#e1e1e1;border:1px solid #adadad"></div>
<div class="t" dir="rtl" style="left:771px;width:600px;text-align:center;top:803.0px;font-size:13px;line-height:18px;color:#1a1a1a;font-weight:normal;">حذف</div>
<svg style="position:absolute;left:1021px;top:804px" width="16" height="16" viewBox="0 0 16 16"><rect x="0" y="0" width="16" height="16" rx="1.5" fill="#c8202e"/><path d="M4 5H12L11 14H5Z" fill="#fff"/><rect x="3" y="3" width="10" height="1.5" fill="#fff"/><path d="M6.5 6.5V12.5M9.5 6.5V12.5" stroke="#c8202e"/></svg>
<div style="left:1117px;top:796px;width:96px;height:32px;background:#e1e1e1;border:1px solid #adadad"></div>
<div class="t" dir="rtl" style="left:872px;width:600px;text-align:center;top:803.0px;font-size:13px;line-height:18px;color:#1a1a1a;font-weight:normal;">جديد</div>
<svg style="position:absolute;left:1122px;top:804px" width="16" height="16" viewBox="0 0 16 16"><path d="M4 0.7H12.3V15.3H0.7V4Z" fill="#fff" stroke="#a9abae" stroke-width="1.3"/><path d="M4 0.7V4H0.7Z" fill="#c8c8c8" stroke="#a9abae" stroke-width="1"/><path d="M11.3 7.3L12.8 10.6H16.3L13.5 12.8L14.5 16.3L11.3 14.3L8.1 16.3L9.1 12.8L6.3 10.6H9.8Z" fill="#f5e400"/></svg>
<div style="left:1219px;top:796px;width:96px;height:32px;background:#e1e1e1;border:1px solid #adadad"></div>
<div class="t" dir="rtl" style="left:974px;width:600px;text-align:center;top:803.0px;font-size:13px;line-height:18px;color:#1a1a1a;font-weight:normal;">تعديل</div>
<svg style="position:absolute;left:1224px;top:804px" width="16" height="16" viewBox="0 0 16 16"><path d="M4 0.7H12.3V15.3H0.7V4Z" fill="#fff" stroke="#a9abae" stroke-width="1.3"/><path d="M4 0.7V4H0.7Z" fill="#c8c8c8" stroke="#a9abae" stroke-width="1"/><path d="M3.5 15L12.5 4L15 6.3L6 17Z" fill="#7cc242"/><path d="M12.5 4L13.7 2.7L16.1 5L15 6.3Z" fill="#5a9a2e"/></svg>
<div style="left:1320px;top:796px;width:96px;height:32px;background:#e1e1e1;border:1px solid #adadad"></div>
<div class="t" dir="rtl" style="left:1075px;width:600px;text-align:center;top:803.0px;font-size:13px;line-height:18px;color:#1a1a1a;font-weight:normal;">إضافة</div>
<svg style="position:absolute;left:1325px;top:804px" width="16" height="16" viewBox="0 0 16 16"><path d="M4 0.7H12.3V15.3H0.7V4Z" fill="#fff" stroke="#a9abae" stroke-width="1.3"/><path d="M4 0.7V4H0.7Z" fill="#c8c8c8" stroke="#a9abae" stroke-width="1"/><path d="M12.5 9V17M8.5 13H16.5" stroke="#7cc242" stroke-width="2.4"/></svg>
</body></html>
